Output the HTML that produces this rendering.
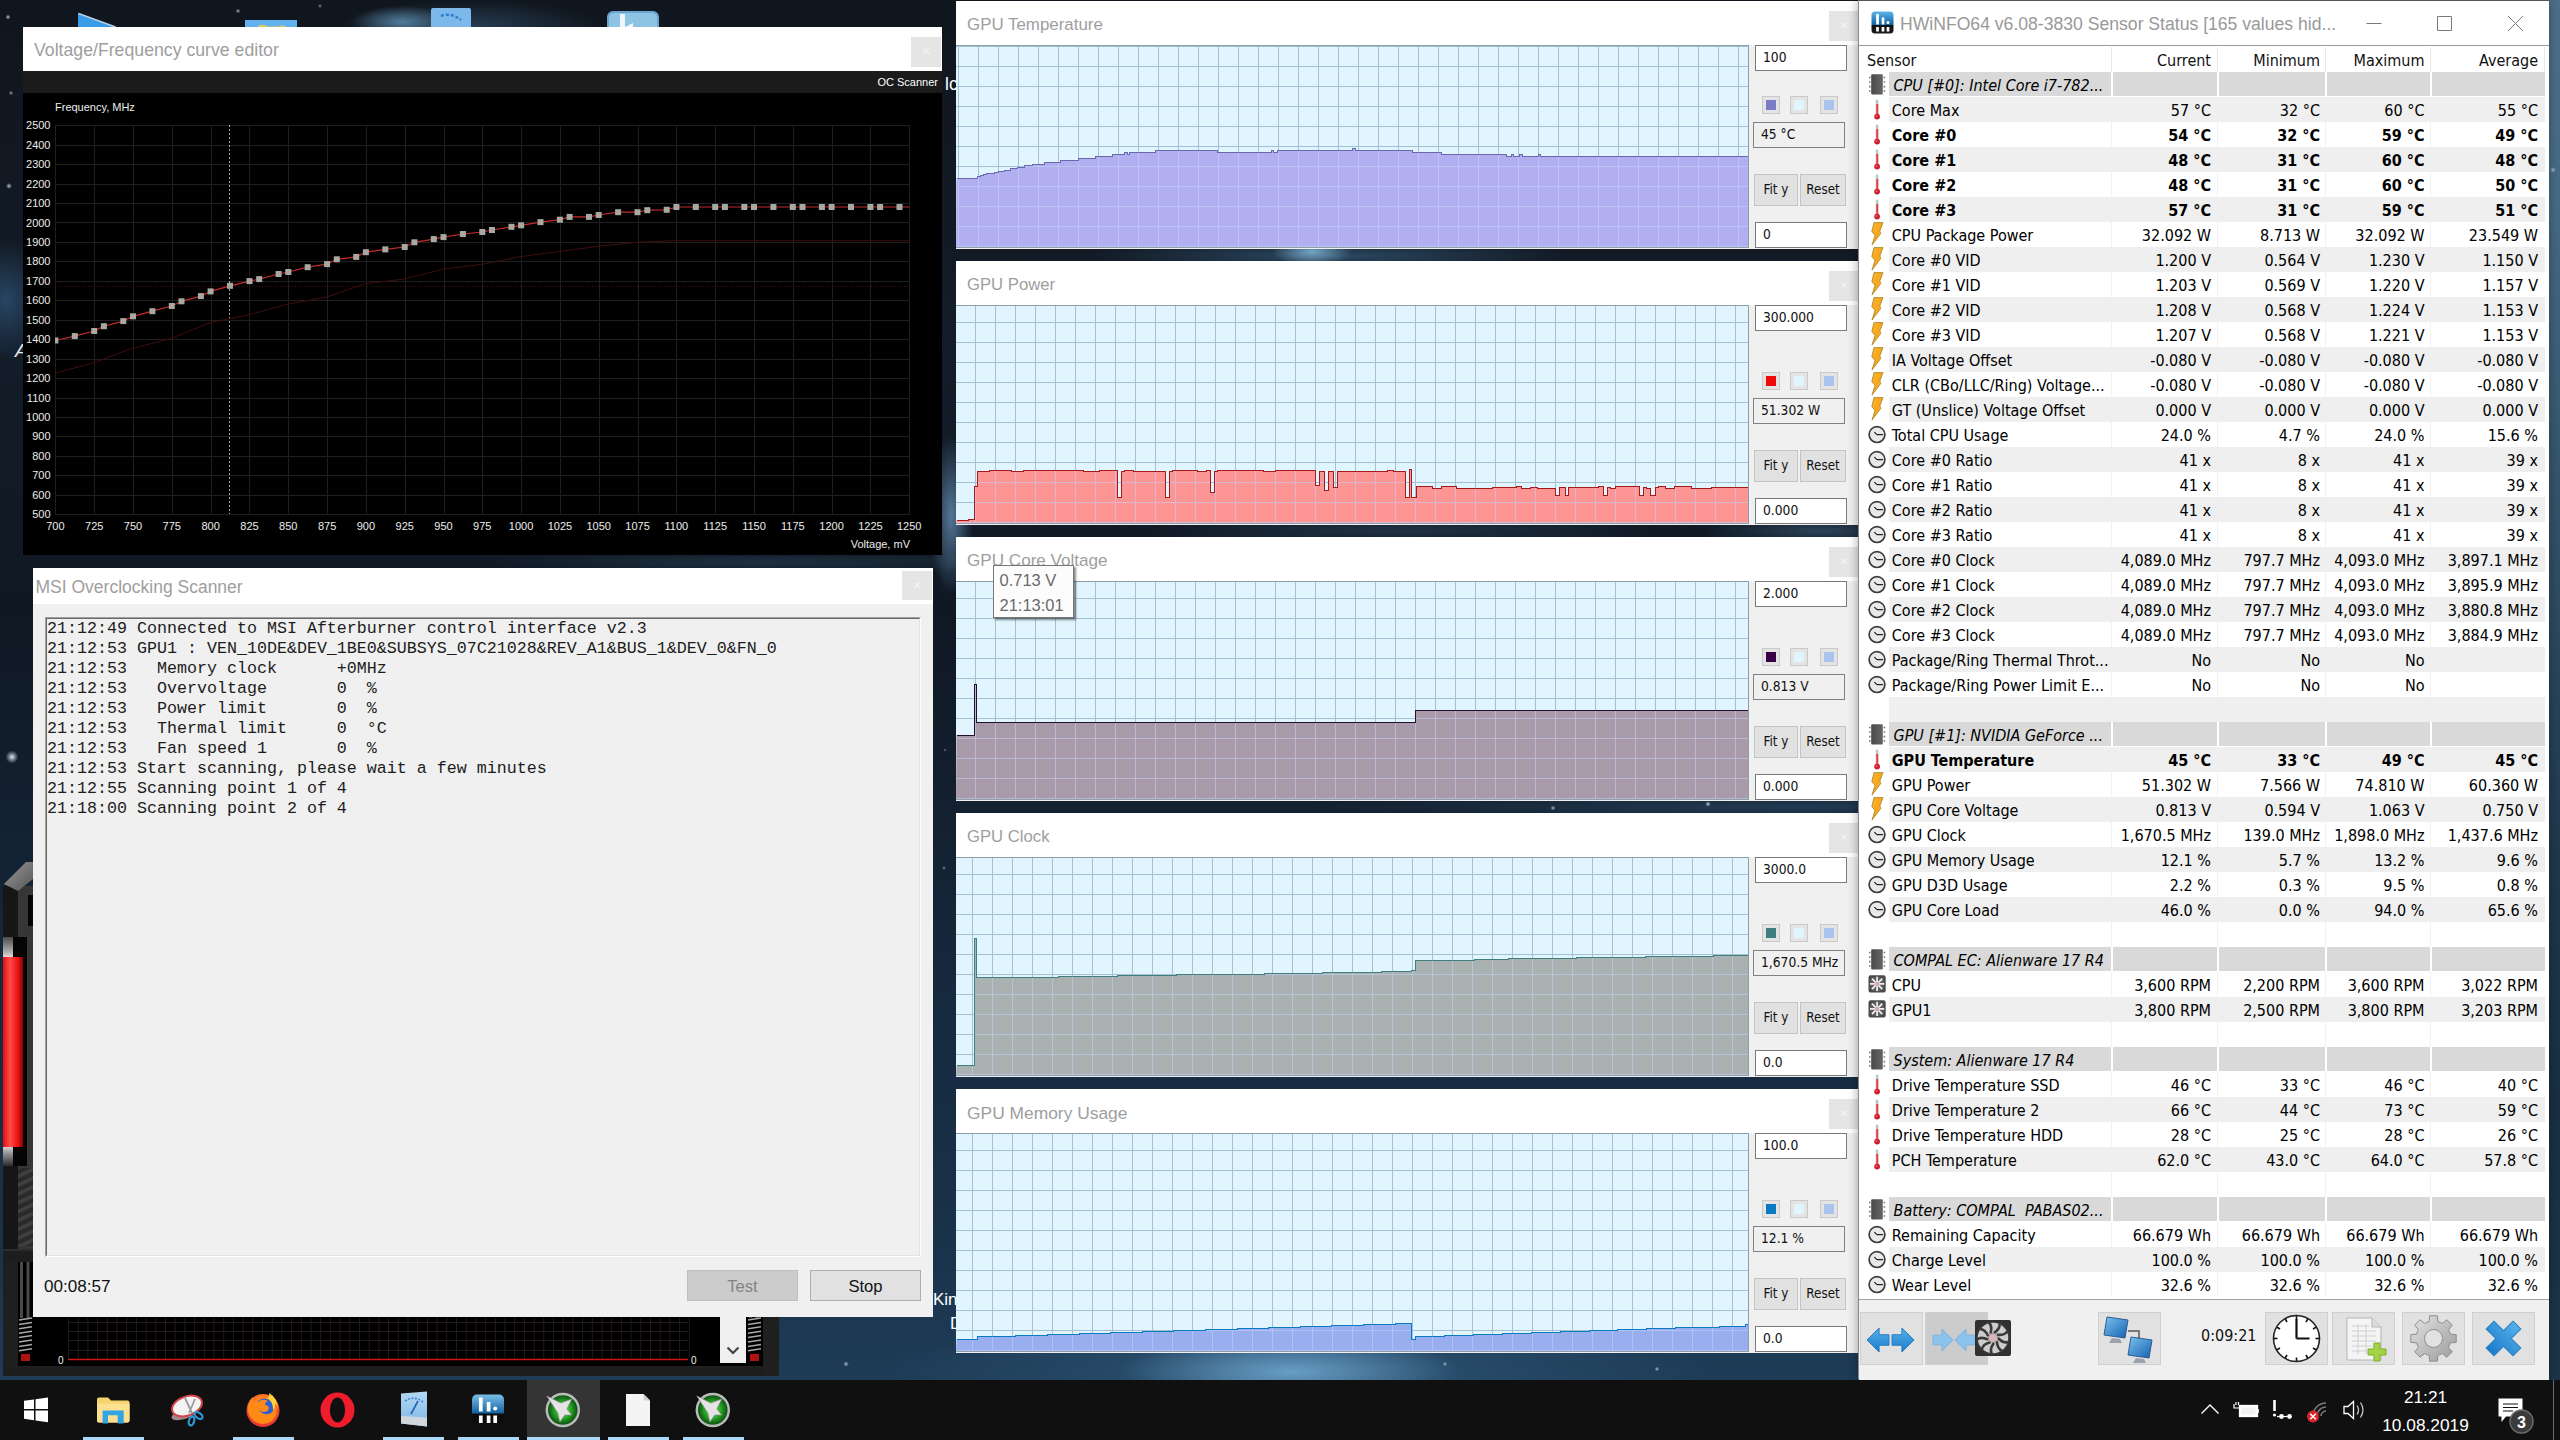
<!DOCTYPE html><html lang="en"><head><meta charset="utf-8"><title>Desktop</title><style>

*{box-sizing:border-box;margin:0;padding:0}
html,body{width:2560px;height:1440px;overflow:hidden}
body{position:relative;background:#0c141e;font-family:"Liberation Sans",sans-serif;}
.abs{position:absolute}
.win{position:absolute;background:#fff}
.tt{position:absolute;color:#9e9e9e;white-space:pre;font-family:"Liberation Sans",sans-serif;}
.tah{font-family:"DejaVu Sans Condensed","Liberation Sans",sans-serif}
.cb{position:absolute;background:#e5e5e5;color:#f4f4f4;text-align:center;font-size:14px;line-height:29px}
.mono{font-family:"Liberation Mono",monospace}
svg{position:absolute;overflow:visible}
svg text{white-space:pre}

</style></head><body>

<div class="abs" id="desk" style="left:0;top:0;width:2560px;height:1440px;
background:radial-gradient(circle 6.4px at 12px 757px, rgba(235,245,255,0.95) 0, rgba(235,245,255,0.47) 45%, rgba(235,245,255,0) 100%),radial-gradient(circle 2.6px at 8px 17px, rgba(235,245,255,0.8) 0, rgba(235,245,255,0.40) 45%, rgba(235,245,255,0) 100%),radial-gradient(circle 3.0px at 9px 186px, rgba(235,245,255,0.8) 0, rgba(235,245,255,0.40) 45%, rgba(235,245,255,0) 100%),radial-gradient(circle 2.4px at 11px 93px, rgba(235,245,255,0.6) 0, rgba(235,245,255,0.30) 45%, rgba(235,245,255,0) 100%),radial-gradient(circle 2.4px at 15px 1064px, rgba(235,245,255,0.6) 0, rgba(235,245,255,0.30) 45%, rgba(235,245,255,0) 100%),radial-gradient(circle 2.0px at 944px 868px, rgba(235,245,255,0.5) 0, rgba(235,245,255,0.25) 45%, rgba(235,245,255,0) 100%),radial-gradient(circle 1.8px at 945px 750px, rgba(235,245,255,0.4) 0, rgba(235,245,255,0.20) 45%, rgba(235,245,255,0) 100%),radial-gradient(circle 2.0px at 1362px 247px, rgba(235,245,255,0.6) 0, rgba(235,245,255,0.30) 45%, rgba(235,245,255,0) 100%),radial-gradient(circle 3.0px at 2553px 170px, rgba(235,245,255,0.6) 0, rgba(235,245,255,0.30) 45%, rgba(235,245,255,0) 100%),radial-gradient(circle 2.6px at 1553px 808px, rgba(235,245,255,0.7) 0, rgba(235,245,255,0.35) 45%, rgba(235,245,255,0) 100%),radial-gradient(circle 2.8px at 1708px 804px, rgba(235,245,255,0.8) 0, rgba(235,245,255,0.40) 45%, rgba(235,245,255,0) 100%),radial-gradient(circle 2.4px at 1657px 1369px, rgba(235,245,255,0.7) 0, rgba(235,245,255,0.35) 45%, rgba(235,245,255,0) 100%),radial-gradient(circle 2.4px at 1445px 1364px, rgba(235,245,255,0.6) 0, rgba(235,245,255,0.30) 45%, rgba(235,245,255,0) 100%),radial-gradient(circle 2.8px at 846px 1364px, rgba(235,245,255,0.7) 0, rgba(235,245,255,0.35) 45%, rgba(235,245,255,0) 100%),radial-gradient(circle 2.4px at 165px 1372px, rgba(235,245,255,0.7) 0, rgba(235,245,255,0.35) 45%, rgba(235,245,255,0) 100%),radial-gradient(circle 2.4px at 238px 11px, rgba(235,245,255,0.7) 0, rgba(235,245,255,0.35) 45%, rgba(235,245,255,0) 100%),radial-gradient(circle 2.0px at 320px 6px, rgba(235,245,255,0.6) 0, rgba(235,245,255,0.30) 45%, rgba(235,245,255,0) 100%),
radial-gradient(ellipse 50px 16px at 402px 22px, rgba(95,145,180,.8), rgba(70,115,150,0) 100%),
radial-gradient(ellipse 130px 26px at 470px 26px, rgba(50,80,108,.65), rgba(45,75,105,0) 100%),
radial-gradient(ellipse 40px 60px at 6px 300px, rgba(45,80,115,.8), rgba(45,75,105,0) 100%),
radial-gradient(ellipse 40px 14px at 1312px 252px, rgba(120,170,200,.95), rgba(90,140,175,0) 100%),
radial-gradient(ellipse 240px 16px at 1330px 256px, rgba(50,85,115,.8), rgba(50,80,110,0) 100%),
radial-gradient(ellipse 260px 14px at 1400px 531px, rgba(40,62,84,.7), rgba(40,60,80,0) 100%),
radial-gradient(ellipse 120px 14px at 1820px 531px, rgba(55,85,110,.7), rgba(40,60,80,0) 100%),
radial-gradient(ellipse 500px 14px at 1800px 807px, rgba(40,70,98,.7), rgba(40,60,80,0) 100%),
radial-gradient(ellipse 22px 80px at 951px 515px, rgba(95,135,170,.85), rgba(60,95,125,0) 100%),
radial-gradient(ellipse 300px 12px at 760px 562px, rgba(40,62,84,.6), rgba(40,60,80,0) 100%),
radial-gradient(ellipse 170px 38px at 1290px 1372px, rgba(110,165,205,.9), rgba(70,115,150,0) 100%),
radial-gradient(ellipse 420px 50px at 1300px 1370px, rgba(50,95,130,.7), rgba(50,95,130,0) 100%),
linear-gradient(#4c7088 0,#466b85 15%,#38586f 32%,#2a465c 48%,#1f384d 62%,#1a2f43 80%,#1c3449 96%) 2549px 0/11px 1380px no-repeat,
linear-gradient(#10161e 0,#121a25 18%,#131d29 24%,#0f1823 42%,#13202f 56%,#162a3f 70%,#193149 85%,#1e3c57 96%,#1e3c57);"></div>

<svg style="left:0;top:0" width="960" height="40" viewBox="0 0 960 40"><path d="M78 13L116 27V40H78Z" fill="#3a9be8"/><path d="M78.500 13.500L115.500 27" stroke="#b5cfe4" stroke-width="1.600"/><rect x="245" y="20" width="52" height="20" fill="#62b2ef"/><path d="M258 25.500q6 -2 10 1h10q4 -2 8 0v3h-28z" fill="#f2c94c" opacity=".85"/><rect x="431" y="8" width="40" height="32" rx="2" fill="#7cb9ea"/><path d="M441 16q10 -4 20 4" stroke="#2f7fcc" stroke-width="2.5" fill="none" stroke-dasharray="3 2"/><rect x="607" y="11" width="52" height="30" rx="6" fill="#6aa6cf"/><rect x="609" y="13" width="48" height="27" rx="5" fill="#8fc3e4"/><path d="M620 14h5v13l8 -4v6h-13z" fill="#eef6fb"/></svg>
<div class="abs" style="left:945px;top:73.500px;font-size:17.500px;line-height:20px;color:#fff;white-space:pre">lc</div>
<div class="abs" style="left:15px;top:340px;font-size:19px;line-height:22px;color:#e8e8e8;font-style:italic">A</div>
<div class="abs" style="left:933px;top:1290px;font-size:17px;line-height:20px;color:#fff;white-space:pre">Kin</div>
<div class="abs" style="left:950px;top:1314px;font-size:17px;line-height:20px;color:#fff;white-space:pre">D</div>
<svg style="left:0;top:0" width="800" height="1440" viewBox="0 0 800 1440">
<defs><linearGradient id="gtube" x1="0" y1="0" x2="1" y2="0"><stop offset="0" stop-color="#e01010"/><stop offset=".35" stop-color="#ff4a4a"/><stop offset=".7" stop-color="#f01818"/><stop offset="1" stop-color="#8a0000"/></linearGradient><linearGradient id="gcap" x1="0" y1="0" x2="0" y2="1"><stop offset="0" stop-color="#4a4a4a"/><stop offset=".8" stop-color="#b8b8b8"/><stop offset="1" stop-color="#e6d6d6"/></linearGradient><linearGradient id="gcap2" x1="0" y1="0" x2="0" y2="1"><stop offset="0" stop-color="#d8d0d0"/><stop offset=".3" stop-color="#9a9a9a"/><stop offset="1" stop-color="#2a2a2a"/></linearGradient><linearGradient id="gwedge" x1="0" y1="0" x2="1" y2="1"><stop offset="0" stop-color="#9a9a9a"/><stop offset="1" stop-color="#555"/></linearGradient><pattern id="pcarb" width="4" height="8" patternUnits="userSpaceOnUse" patternTransform="rotate(-25)"><rect width="4" height="8" fill="#2a2a2a"/><rect width="4" height="3.500" fill="#404040"/></pattern></defs>
<path d="M3 886H33V1376H3Z" fill="#161616"/>
<path d="M18 886H33V1250H18Z" fill="#363636"/>
<path d="M18 1168H33V1246H18Z" fill="url(#pcarb)"/>
<path d="M28 895H33V926H28Z" fill="#050505"/>
<path d="M4 884L26 862H33V879L18 891Z" fill="url(#gwedge)"/>
<path d="M3 937H27V1166H3Z" fill="#050505"/>
<path d="M3 957H23V1147H3Z" fill="url(#gtube)"/>
<path d="M3 937H13V957H3Z" fill="url(#gcap)"/><path d="M3 1147H13V1166H3Z" fill="url(#gcap2)"/>
<path d="M3 1249H33V1262H3Z" fill="#1d1d1d"/><path d="M3 1249H33V1251H3Z" fill="#2c2c2c"/>
<path d="M3 1262H779V1376H3Z" fill="#1f1f1f"/>
<path d="M18 1262H763V1366H18Z" fill="#000"/>
<path d="M3 1368H779V1376H3Z" fill="#1d1d1d"/>
<path d="M763 1262H779V1376H763Z" fill="#1f1f1f"/>
<path d="M21.5 1262V1318M28 1262V1318" stroke="#4a4a4a" stroke-width="3"/>
<path d="M19 1320.0L32 1318.0" stroke="#a8a8a8" stroke-width="1.500"/>
<path d="M19 1324.4L32 1322.4" stroke="#a8a8a8" stroke-width="1.500"/>
<path d="M19 1328.8L32 1326.8" stroke="#a8a8a8" stroke-width="1.500"/>
<path d="M19 1333.2L32 1331.2" stroke="#a8a8a8" stroke-width="1.500"/>
<path d="M19 1337.6L32 1335.6" stroke="#a8a8a8" stroke-width="1.500"/>
<path d="M19 1342.0L32 1340.0" stroke="#a8a8a8" stroke-width="1.500"/>
<path d="M19 1346.4L32 1344.4" stroke="#a8a8a8" stroke-width="1.500"/>
<path d="M19 1350.8L32 1348.8" stroke="#a8a8a8" stroke-width="1.500"/>
<path d="M21 1354h9v7h-9z" fill="#b01212"/>
<path d="M750.5 1262V1318M757 1262V1318" stroke="#4a4a4a" stroke-width="3"/>
<path d="M748 1320.0L761 1318.0" stroke="#a8a8a8" stroke-width="1.500"/>
<path d="M748 1324.4L761 1322.4" stroke="#a8a8a8" stroke-width="1.500"/>
<path d="M748 1328.8L761 1326.8" stroke="#a8a8a8" stroke-width="1.500"/>
<path d="M748 1333.2L761 1331.2" stroke="#a8a8a8" stroke-width="1.500"/>
<path d="M748 1337.6L761 1335.6" stroke="#a8a8a8" stroke-width="1.500"/>
<path d="M748 1342.0L761 1340.0" stroke="#a8a8a8" stroke-width="1.500"/>
<path d="M748 1346.4L761 1344.4" stroke="#a8a8a8" stroke-width="1.500"/>
<path d="M748 1350.8L761 1348.8" stroke="#a8a8a8" stroke-width="1.500"/>
<path d="M750 1354h9v7h-9z" fill="#b01212"/>
<path d="M68.5 1318V1359M78.2 1318V1359M87.9 1318V1359M97.6 1318V1359M107.3 1318V1359M117.0 1318V1359M126.7 1318V1359M136.4 1318V1359M146.1 1318V1359M155.8 1318V1359M165.5 1318V1359M175.2 1318V1359M184.9 1318V1359M194.6 1318V1359M204.3 1318V1359M214.0 1318V1359M223.7 1318V1359M233.4 1318V1359M243.1 1318V1359M252.8 1318V1359M262.5 1318V1359M272.2 1318V1359M281.9 1318V1359M291.6 1318V1359M301.3 1318V1359M311.0 1318V1359M320.7 1318V1359M330.4 1318V1359M340.1 1318V1359M349.8 1318V1359M359.5 1318V1359M369.2 1318V1359M378.9 1318V1359M388.6 1318V1359M398.3 1318V1359M408.0 1318V1359M417.7 1318V1359M427.4 1318V1359M437.1 1318V1359M446.8 1318V1359M456.5 1318V1359M466.2 1318V1359M475.9 1318V1359M485.6 1318V1359M495.3 1318V1359M505.0 1318V1359M514.7 1318V1359M524.4 1318V1359M534.1 1318V1359M543.8 1318V1359M553.5 1318V1359M563.2 1318V1359M572.9 1318V1359M582.6 1318V1359M592.3 1318V1359M602.0 1318V1359M611.7 1318V1359M621.4 1318V1359M631.1 1318V1359M640.8 1318V1359M650.5 1318V1359M660.2 1318V1359M669.9 1318V1359M679.6 1318V1359M689.3 1318V1359M68 1322.5H688M68 1331.5H688M68 1340.5H688M68 1350.5H688" stroke="#231a1a" stroke-width="1" fill="none"/>
<path d="M68 1359.500H688" stroke="#c81818" stroke-width="1.600"/>
<text x="58" y="1363.500" font-size="10" fill="#eee" font-family="Liberation Sans, sans-serif">0</text>
<text x="691" y="1363.500" font-size="10" fill="#eee" font-family="Liberation Sans, sans-serif">0</text>
</svg>
<div class="abs" style="left:720px;top:1316px;width:26px;height:47px;background:#f0f0f0"></div>
<svg style="left:726px;top:1346px" width="14" height="10" viewBox="0 0 14 10"><path d="M1.5 1.5L7 7L12.5 1.5" stroke="#444" stroke-width="2.2" fill="none"/></svg>
<div class="win" style="left:23px;top:27px;width:919px;height:528px;background:#000">
<div class="abs" style="left:0;top:0;width:919px;height:44px;background:#fff"></div>
<div class="tt" style="left:11px;top:12px;font-size:17.7px;line-height:22px">Voltage/Frequency curve editor</div>
<div class="cb" style="left:888px;top:10px;width:30px;height:30px">×</div>
<div class="abs" style="left:0;top:44px;width:919px;height:22px;background:#1b1b1b"></div>
<div class="abs" style="right:4px;top:49px;font-size:11px;line-height:13px;color:#fff;white-space:pre">OC Scanner</div>
</div>
<svg style="left:0;top:0" width="960" height="560" viewBox="0 0 960 560" font-family="Liberation Sans, sans-serif" font-size="11" fill="#ececec">
<path d="M55.5 125V514.5M94.5 125V514.5M133.5 125V514.5M172.5 125V514.5M211.5 125V514.5M249.5 125V514.5M288.5 125V514.5M327.5 125V514.5M366.5 125V514.5M405.5 125V514.5M444.5 125V514.5M482.5 125V514.5M521.5 125V514.5M560.5 125V514.5M599.5 125V514.5M638.5 125V514.5M676.5 125V514.5M715.5 125V514.5M754.5 125V514.5M793.5 125V514.5M832.5 125V514.5M870.5 125V514.5M909.5 125V514.5M55 514.5H910M55 495.5H910M55 475.5H910M55 456.5H910M55 436.5H910M55 417.5H910M55 398.5H910M55 378.5H910M55 359.5H910M55 339.5H910M55 320.5H910M55 300.5H910M55 281.5H910M55 261.5H910M55 242.5H910M55 222.5H910M55 203.5H910M55 184.5H910M55 164.5H910M55 145.5H910M55 125.5H910" stroke="#1f1f1f" stroke-width="1" fill="none" shape-rendering="crispEdges"/>
<text x="50.5" y="518.2" text-anchor="end">500</text>
<text x="50.5" y="498.8" text-anchor="end">600</text>
<text x="50.5" y="479.3" text-anchor="end">700</text>
<text x="50.5" y="459.9" text-anchor="end">800</text>
<text x="50.5" y="440.4" text-anchor="end">900</text>
<text x="50.5" y="421.0" text-anchor="end">1000</text>
<text x="50.5" y="401.5" text-anchor="end">1100</text>
<text x="50.5" y="382.1" text-anchor="end">1200</text>
<text x="50.5" y="362.6" text-anchor="end">1300</text>
<text x="50.5" y="343.2" text-anchor="end">1400</text>
<text x="50.5" y="323.7" text-anchor="end">1500</text>
<text x="50.5" y="304.3" text-anchor="end">1600</text>
<text x="50.5" y="284.8" text-anchor="end">1700</text>
<text x="50.5" y="265.4" text-anchor="end">1800</text>
<text x="50.5" y="245.9" text-anchor="end">1900</text>
<text x="50.5" y="226.5" text-anchor="end">2000</text>
<text x="50.5" y="207.0" text-anchor="end">2100</text>
<text x="50.5" y="187.6" text-anchor="end">2200</text>
<text x="50.5" y="168.1" text-anchor="end">2300</text>
<text x="50.5" y="148.7" text-anchor="end">2400</text>
<text x="50.5" y="129.2" text-anchor="end">2500</text>
<text x="55.4" y="530" text-anchor="middle">700</text>
<text x="94.2" y="530" text-anchor="middle">725</text>
<text x="133.0" y="530" text-anchor="middle">750</text>
<text x="171.8" y="530" text-anchor="middle">775</text>
<text x="210.6" y="530" text-anchor="middle">800</text>
<text x="249.5" y="530" text-anchor="middle">825</text>
<text x="288.3" y="530" text-anchor="middle">850</text>
<text x="327.1" y="530" text-anchor="middle">875</text>
<text x="365.9" y="530" text-anchor="middle">900</text>
<text x="404.7" y="530" text-anchor="middle">925</text>
<text x="443.5" y="530" text-anchor="middle">950</text>
<text x="482.3" y="530" text-anchor="middle">975</text>
<text x="521.1" y="530" text-anchor="middle">1000</text>
<text x="559.9" y="530" text-anchor="middle">1025</text>
<text x="598.7" y="530" text-anchor="middle">1050</text>
<text x="637.6" y="530" text-anchor="middle">1075</text>
<text x="676.4" y="530" text-anchor="middle">1100</text>
<text x="715.2" y="530" text-anchor="middle">1125</text>
<text x="754.0" y="530" text-anchor="middle">1150</text>
<text x="792.8" y="530" text-anchor="middle">1175</text>
<text x="831.6" y="530" text-anchor="middle">1200</text>
<text x="870.4" y="530" text-anchor="middle">1225</text>
<text x="909.2" y="530" text-anchor="middle">1250</text>
<text x="55" y="111">Frequency, MHz</text>
<text x="910" y="548" text-anchor="end">Voltage, mV</text>
<path d="M229.5 125V514" stroke="#a8a8a8" stroke-width="1" stroke-dasharray="2 2" fill="none"/>
<path d="M55 286.5H910" stroke="#451010" stroke-width="1" stroke-dasharray="1 2" fill="none"/>
<polyline points="55.4,373 93,363 132,348.4 171,338.5 210,322.6 249.4,314.7 288.2,304 327,297 365,283.8 403.8,279.1 443,269.2 481.8,264.4 521,256.5 559.8,251.4 599,246.2 637,242.3 673,240.7 909.3,240.7" stroke="#3e0f0f" stroke-width="1" fill="none"/>
<polyline points="55.4,340.5 74.8,336.1 94.2,331.0 103.9,326.2 123.3,321.1 133.0,316.3 152.4,311.2 171.8,306.0 181.5,301.3 200.9,296.1 210.6,291.4 230.0,285.8 249.5,281.1 259.2,279.1 278.6,274.0 288.3,272.0 307.7,267.2 327.1,264.1 336.8,259.3 356.2,256.9 365.9,252.2 385.3,249.4 404.7,247.0 414.4,242.3 433.8,239.1 443.5,237.1 462.9,234.0 482.3,232.0 492.0,230.0 511.4,226.8 521.1,225.3 540.5,222.1 559.9,219.7 569.6,216.9 589.0,216.9 598.7,215.0 618.1,212.2 637.5,212.2 647.3,210.2 666.7,209.8 676.4,207.0 695.8,207.0 715.2,207.0 724.9,207.0 744.3,207.0 754.0,207.0 773.4,207.0 792.8,207.0 802.5,207.0 821.9,207.0 831.6,207.0 851.0,207.0 870.4,207.0 880.1,207.0 899.5,207.0 909.3,207.0" stroke="#c42a2a" stroke-width="1.2" fill="none"/>
<rect x="55.0" y="337.5" width="3.4" height="6" fill="#a8a8a2"/>
<rect x="71.8" y="333.1" width="6.0" height="6" fill="#a8a8a2"/>
<rect x="91.2" y="328.0" width="6.0" height="6" fill="#a8a8a2"/>
<rect x="100.9" y="323.2" width="6.0" height="6" fill="#a8a8a2"/>
<rect x="120.3" y="318.1" width="6.0" height="6" fill="#a8a8a2"/>
<rect x="130.0" y="313.3" width="6.0" height="6" fill="#a8a8a2"/>
<rect x="149.4" y="308.2" width="6.0" height="6" fill="#a8a8a2"/>
<rect x="168.8" y="303.0" width="6.0" height="6" fill="#a8a8a2"/>
<rect x="178.5" y="298.3" width="6.0" height="6" fill="#a8a8a2"/>
<rect x="197.9" y="293.1" width="6.0" height="6" fill="#a8a8a2"/>
<rect x="207.6" y="288.4" width="6.0" height="6" fill="#a8a8a2"/>
<rect x="227.0" y="282.8" width="6.0" height="6" fill="#a8a8a2"/>
<rect x="246.5" y="278.1" width="6.0" height="6" fill="#a8a8a2"/>
<rect x="256.2" y="276.1" width="6.0" height="6" fill="#a8a8a2"/>
<rect x="275.6" y="271.0" width="6.0" height="6" fill="#a8a8a2"/>
<rect x="285.3" y="269.0" width="6.0" height="6" fill="#a8a8a2"/>
<rect x="304.7" y="264.2" width="6.0" height="6" fill="#a8a8a2"/>
<rect x="324.1" y="261.1" width="6.0" height="6" fill="#a8a8a2"/>
<rect x="333.8" y="256.3" width="6.0" height="6" fill="#a8a8a2"/>
<rect x="353.2" y="253.9" width="6.0" height="6" fill="#a8a8a2"/>
<rect x="362.9" y="249.2" width="6.0" height="6" fill="#a8a8a2"/>
<rect x="382.3" y="246.4" width="6.0" height="6" fill="#a8a8a2"/>
<rect x="401.7" y="244.0" width="6.0" height="6" fill="#a8a8a2"/>
<rect x="411.4" y="239.3" width="6.0" height="6" fill="#a8a8a2"/>
<rect x="430.8" y="236.1" width="6.0" height="6" fill="#a8a8a2"/>
<rect x="440.5" y="234.1" width="6.0" height="6" fill="#a8a8a2"/>
<rect x="459.9" y="231.0" width="6.0" height="6" fill="#a8a8a2"/>
<rect x="479.3" y="229.0" width="6.0" height="6" fill="#a8a8a2"/>
<rect x="489.0" y="227.0" width="6.0" height="6" fill="#a8a8a2"/>
<rect x="508.4" y="223.8" width="6.0" height="6" fill="#a8a8a2"/>
<rect x="518.1" y="222.3" width="6.0" height="6" fill="#a8a8a2"/>
<rect x="537.5" y="219.1" width="6.0" height="6" fill="#a8a8a2"/>
<rect x="556.9" y="216.7" width="6.0" height="6" fill="#a8a8a2"/>
<rect x="566.6" y="213.9" width="6.0" height="6" fill="#a8a8a2"/>
<rect x="586.0" y="213.9" width="6.0" height="6" fill="#a8a8a2"/>
<rect x="595.7" y="212.0" width="6.0" height="6" fill="#a8a8a2"/>
<rect x="615.1" y="209.2" width="6.0" height="6" fill="#a8a8a2"/>
<rect x="634.5" y="209.2" width="6.0" height="6" fill="#a8a8a2"/>
<rect x="644.3" y="207.2" width="6.0" height="6" fill="#a8a8a2"/>
<rect x="663.7" y="206.8" width="6.0" height="6" fill="#a8a8a2"/>
<rect x="673.4" y="204.0" width="6.0" height="6" fill="#a8a8a2"/>
<rect x="692.8" y="204.0" width="6.0" height="6" fill="#a8a8a2"/>
<rect x="712.2" y="204.0" width="6.0" height="6" fill="#a8a8a2"/>
<rect x="721.9" y="204.0" width="6.0" height="6" fill="#a8a8a2"/>
<rect x="741.3" y="204.0" width="6.0" height="6" fill="#a8a8a2"/>
<rect x="751.0" y="204.0" width="6.0" height="6" fill="#a8a8a2"/>
<rect x="770.4" y="204.0" width="6.0" height="6" fill="#a8a8a2"/>
<rect x="789.8" y="204.0" width="6.0" height="6" fill="#a8a8a2"/>
<rect x="799.5" y="204.0" width="6.0" height="6" fill="#a8a8a2"/>
<rect x="818.9" y="204.0" width="6.0" height="6" fill="#a8a8a2"/>
<rect x="828.6" y="204.0" width="6.0" height="6" fill="#a8a8a2"/>
<rect x="848.0" y="204.0" width="6.0" height="6" fill="#a8a8a2"/>
<rect x="867.4" y="204.0" width="6.0" height="6" fill="#a8a8a2"/>
<rect x="877.1" y="204.0" width="6.0" height="6" fill="#a8a8a2"/>
<rect x="896.5" y="204.0" width="6.0" height="6" fill="#a8a8a2"/>
</svg>
<div class="win" style="left:33px;top:568px;width:900px;height:749px;background:#f0f0f0">
<div class="abs" style="left:0;top:0;width:900px;height:36px;background:#fff"></div>
<div class="tt" style="left:2.5px;top:8px;font-size:17.5px;line-height:22px">MSI Overclocking Scanner</div>
<div class="cb" style="left:869px;top:3px;width:30px;height:29px">×</div>
<div class="abs" style="left:12px;top:49px;width:876px;height:640px;border:1px solid;border-color:#a0a0a0 #fff #fff #a0a0a0;background:#f0f0f0"><div class="abs" style="left:0;top:0;right:0;bottom:0;border:1px solid;border-color:#696969 #e3e3e3 #e3e3e3 #696969"></div><pre class="mono" style="position:absolute;left:1px;top:1px;font-size:16.67px;line-height:20px;color:#1c1c1c">21:12:49 Connected to MSI Afterburner control interface v2.3
21:12:53 GPU1 : VEN_10DE&amp;DEV_1BE0&amp;SUBSYS_07C21028&amp;REV_A1&amp;BUS_1&amp;DEV_0&amp;FN_0
21:12:53   Memory clock      +0MHz
21:12:53   Overvoltage       0  %
21:12:53   Power limit       0  %
21:12:53   Thermal limit     0  °C
21:12:53   Fan speed 1       0  %
21:12:53 Start scanning, please wait a few minutes
21:12:55 Scanning point 1 of 4
21:18:00 Scanning point 2 of 4</pre></div>
<div class="abs" style="left:11px;top:708px;font-size:17.1px;line-height:22px;color:#111;white-space:pre">00:08:57</div>
<div class="abs" style="left:654px;top:702px;width:111px;height:31px;background:#cccccc;border:1px solid #bfbfbf;color:#838383;font-size:16.6px;line-height:31px;text-align:center">Test</div>
<div class="abs" style="left:777px;top:702px;width:111px;height:31px;background:#e1e1e1;border:1px solid #adadad;color:#111;font-size:16.6px;line-height:31px;text-align:center">Stop</div>
</div>
<div class="win" style="left:956px;top:1px;width:904px;height:248px">
<div class="tt" style="left:11px;top:13px;font-size:16.9px;line-height:22px">GPU Temperature</div>
<div class="cb" style="left:873px;top:10px;width:30px;height:30px">×</div>
<div class="abs" style="left:0;top:44px;width:904px;height:204px;background:#f0f0f0"></div>
<div class="abs" style="left:0;top:44px;width:793px;height:203px;background:#e0f5fd"></div>
<div class="abs tah" style="left:799px;top:44px;width:92px;height:26px;background:#fff;border:1px solid #7a7a7a;font-size:13.7px;line-height:23px;padding-left:7px;color:#111;white-space:pre">100</div>
<div class="abs tah" style="left:797px;top:121px;width:92px;height:26px;background:#f0f0f0;border:1px solid #828282;font-size:13.7px;line-height:23px;padding-left:7px;color:#111;white-space:pre">45 °C</div>
<div class="abs tah" style="left:799px;top:221px;width:92px;height:26px;background:#fff;border:1px solid #7a7a7a;font-size:13.7px;line-height:23px;padding-left:7px;color:#111;white-space:pre">0</div>
<div class="abs" style="left:806px;top:95px;width:18px;height:18px;background:#e4e4e4;border:1px solid #c9c9c9"><div class="abs" style="left:3px;top:3px;width:10px;height:10px;background:#7b7bc9"></div></div>
<div class="abs" style="left:834px;top:95px;width:18px;height:18px;background:#e4e4e4;border:1px solid #c9c9c9"><div class="abs" style="left:3px;top:3px;width:10px;height:10px;background:#e0f5fd"></div></div>
<div class="abs" style="left:864px;top:95px;width:18px;height:18px;background:#e4e4e4;border:1px solid #c9c9c9"><div class="abs" style="left:3px;top:3px;width:10px;height:10px;background:#aac4ee"></div></div>
<div class="abs tah" style="left:798px;top:173px;width:44px;height:32px;background:#e1e1e1;border:1px solid #c4c4c4;font-size:13.33px;line-height:29px;text-align:center;color:#111">Fit y</div>
<div class="abs tah" style="left:844px;top:173px;width:46px;height:32px;background:#e1e1e1;border:1px solid #c4c4c4;font-size:13.33px;line-height:29px;text-align:center;color:#111">Reset</div>
</div>
<svg style="left:0;top:0" width="2560" height="1440" viewBox="0 0 2560 1440">
<path d="M958.5 45V248M978.5 45V248M998.5 45V248M1018.5 45V248M1038.5 45V248M1058.5 45V248M1078.5 45V248M1098.5 45V248M1118.5 45V248M1138.5 45V248M1158.5 45V248M1178.5 45V248M1198.5 45V248M1218.5 45V248M1238.5 45V248M1258.5 45V248M1278.5 45V248M1298.5 45V248M1318.5 45V248M1338.5 45V248M1358.5 45V248M1378.5 45V248M1398.5 45V248M1418.5 45V248M1438.5 45V248M1458.5 45V248M1478.5 45V248M1498.5 45V248M1518.5 45V248M1538.5 45V248M1558.5 45V248M1578.5 45V248M1598.5 45V248M1618.5 45V248M1638.5 45V248M1658.5 45V248M1678.5 45V248M1698.5 45V248M1718.5 45V248M1738.5 45V248M956 246.5H1749M956 226.5H1749M956 206.5H1749M956 186.5H1749M956 166.5H1749M956 146.5H1749M956 126.5H1749M956 106.5H1749M956 86.5H1749M956 66.5H1749M956 46.5H1749" stroke="#a6c0d3" stroke-width="1" fill="none" shape-rendering="crispEdges"/>
<path d="M956.5 178.5H977.5V176.5H980.5V175.5H983.5V174.5H986.5V173.5H989.5V173.5H994.5V172.5H998.5V171.5H1004.5V170.5H1010.5V168.5H1017.5V167.5H1024.5V165.5H1032.5V164.5H1044.5V162.5H1060.5V160.5H1078.5V158.5H1095.5V156.5H1112.5V154.5H1124.5V152.5H1127.5V154.5H1129.5V152.5H1135.5V152.5H1155.5V150.5H1217.5V152.5H1271.5V150.5H1273.5V152.5H1277.5V150.5H1352.5V148.5H1355.5V150.5H1412.5V152.5H1441.5V154.5H1506.5V156.5H1511.5V154.5H1513.5V156.5H1519.5V154.5H1522.5V156.5H1538.5V154.5H1540.5V156.5H1749V248H956Z" fill="#b1aff0" stroke="none"/>
<clipPath id="c1"><path d="M956.5 178.5H977.5V176.5H980.5V175.5H983.5V174.5H986.5V173.5H989.5V173.5H994.5V172.5H998.5V171.5H1004.5V170.5H1010.5V168.5H1017.5V167.5H1024.5V165.5H1032.5V164.5H1044.5V162.5H1060.5V160.5H1078.5V158.5H1095.5V156.5H1112.5V154.5H1124.5V152.5H1127.5V154.5H1129.5V152.5H1135.5V152.5H1155.5V150.5H1217.5V152.5H1271.5V150.5H1273.5V152.5H1277.5V150.5H1352.5V148.5H1355.5V150.5H1412.5V152.5H1441.5V154.5H1506.5V156.5H1511.5V154.5H1513.5V156.5H1519.5V154.5H1522.5V156.5H1538.5V154.5H1540.5V156.5H1749V248H956Z"/></clipPath>
<path d="M958.5 45V248M978.5 45V248M998.5 45V248M1018.5 45V248M1038.5 45V248M1058.5 45V248M1078.5 45V248M1098.5 45V248M1118.5 45V248M1138.5 45V248M1158.5 45V248M1178.5 45V248M1198.5 45V248M1218.5 45V248M1238.5 45V248M1258.5 45V248M1278.5 45V248M1298.5 45V248M1318.5 45V248M1338.5 45V248M1358.5 45V248M1378.5 45V248M1398.5 45V248M1418.5 45V248M1438.5 45V248M1458.5 45V248M1478.5 45V248M1498.5 45V248M1518.5 45V248M1538.5 45V248M1558.5 45V248M1578.5 45V248M1598.5 45V248M1618.5 45V248M1638.5 45V248M1658.5 45V248M1678.5 45V248M1698.5 45V248M1718.5 45V248M1738.5 45V248M956 246.5H1749M956 226.5H1749M956 206.5H1749M956 186.5H1749M956 166.5H1749M956 146.5H1749M956 126.5H1749M956 106.5H1749M956 86.5H1749M956 66.5H1749M956 46.5H1749" stroke="#c4d4fa" stroke-opacity=".55" stroke-width="1" fill="none" shape-rendering="crispEdges" clip-path="url(#c1)"/>
<path d="M956.5 178.5H977.5V176.5H980.5V175.5H983.5V174.5H986.5V173.5H989.5V173.5H994.5V172.5H998.5V171.5H1004.5V170.5H1010.5V168.5H1017.5V167.5H1024.5V165.5H1032.5V164.5H1044.5V162.5H1060.5V160.5H1078.5V158.5H1095.5V156.5H1112.5V154.5H1124.5V152.5H1127.5V154.5H1129.5V152.5H1135.5V152.5H1155.5V150.5H1217.5V152.5H1271.5V150.5H1273.5V152.5H1277.5V150.5H1352.5V148.5H1355.5V150.5H1412.5V152.5H1441.5V154.5H1506.5V156.5H1511.5V154.5H1513.5V156.5H1519.5V154.5H1522.5V156.5H1538.5V154.5H1540.5V156.5H1749" fill="none" stroke="#6a68ae" stroke-width="1" shape-rendering="crispEdges"/>
<path d="M956 45.5H1749M1748.5 45V248M956 247.5H1749" stroke="#8d9ea8" stroke-width="1" fill="none" shape-rendering="crispEdges"/>
</svg>
<div class="win" style="left:956px;top:261px;width:904px;height:264px">
<div class="tt" style="left:11px;top:13px;font-size:16.7px;line-height:22px">GPU Power</div>
<div class="cb" style="left:873px;top:10px;width:30px;height:30px">×</div>
<div class="abs" style="left:0;top:44px;width:904px;height:220px;background:#f0f0f0"></div>
<div class="abs" style="left:0;top:44px;width:793px;height:219px;background:#e0f5fd"></div>
<div class="abs tah" style="left:799px;top:44px;width:92px;height:26px;background:#fff;border:1px solid #7a7a7a;font-size:13.7px;line-height:23px;padding-left:7px;color:#111;white-space:pre">300.000</div>
<div class="abs tah" style="left:797px;top:137px;width:92px;height:26px;background:#f0f0f0;border:1px solid #828282;font-size:13.7px;line-height:23px;padding-left:7px;color:#111;white-space:pre">51.302 W</div>
<div class="abs tah" style="left:799px;top:237px;width:92px;height:26px;background:#fff;border:1px solid #7a7a7a;font-size:13.7px;line-height:23px;padding-left:7px;color:#111;white-space:pre">0.000</div>
<div class="abs" style="left:806px;top:111px;width:18px;height:18px;background:#e4e4e4;border:1px solid #c9c9c9"><div class="abs" style="left:3px;top:3px;width:10px;height:10px;background:#ee0a0a"></div></div>
<div class="abs" style="left:834px;top:111px;width:18px;height:18px;background:#e4e4e4;border:1px solid #c9c9c9"><div class="abs" style="left:3px;top:3px;width:10px;height:10px;background:#e0f5fd"></div></div>
<div class="abs" style="left:864px;top:111px;width:18px;height:18px;background:#e4e4e4;border:1px solid #c9c9c9"><div class="abs" style="left:3px;top:3px;width:10px;height:10px;background:#aac4ee"></div></div>
<div class="abs tah" style="left:798px;top:189px;width:44px;height:32px;background:#e1e1e1;border:1px solid #c4c4c4;font-size:13.33px;line-height:29px;text-align:center;color:#111">Fit y</div>
<div class="abs tah" style="left:844px;top:189px;width:46px;height:32px;background:#e1e1e1;border:1px solid #c4c4c4;font-size:13.33px;line-height:29px;text-align:center;color:#111">Reset</div>
</div>
<svg style="left:0;top:0" width="2560" height="1440" viewBox="0 0 2560 1440">
<path d="M975.5 305V524M995.5 305V524M1015.5 305V524M1035.5 305V524M1055.5 305V524M1075.5 305V524M1095.5 305V524M1115.5 305V524M1135.5 305V524M1155.5 305V524M1175.5 305V524M1195.5 305V524M1215.5 305V524M1235.5 305V524M1255.5 305V524M1275.5 305V524M1295.5 305V524M1315.5 305V524M1335.5 305V524M1355.5 305V524M1375.5 305V524M1395.5 305V524M1415.5 305V524M1435.5 305V524M1455.5 305V524M1475.5 305V524M1495.5 305V524M1515.5 305V524M1535.5 305V524M1555.5 305V524M1575.5 305V524M1595.5 305V524M1615.5 305V524M1635.5 305V524M1655.5 305V524M1675.5 305V524M1695.5 305V524M1715.5 305V524M1735.5 305V524M956 522.5H1749M956 502.5H1749M956 482.5H1749M956 462.5H1749M956 442.5H1749M956 422.5H1749M956 402.5H1749M956 382.5H1749M956 362.5H1749M956 342.5H1749M956 322.5H1749" stroke="#a6c0d3" stroke-width="1" fill="none" shape-rendering="crispEdges"/>
<path d="M956.5 520.5H968.5V519.5H974.5V486.5H977.5V471.5H980.5V471.5H989.5V470.5H1011.5V471.5H1023.5V470.5H1039.5V470.5H1061.5V470.5H1083.5V471.5H1099.5V470.5H1117.5V497.5H1121.5V471.5H1124.5V470.5H1133.5V471.5H1149.5V471.5H1165.5V497.5H1169.5V471.5H1172.5V470.5H1188.5V470.5H1197.5V471.5H1206.5V470.5H1210.5V492.5H1214.5V471.5H1217.5V470.5H1223.5V470.5H1229.5V470.5H1251.5V470.5H1263.5V471.5H1275.5V470.5H1297.5V470.5H1315.5V485.5H1319.5V471.5H1324.5V490.5H1328.5V471.5H1333.5V487.5H1337.5V471.5H1340.5V471.5H1356.5V471.5H1378.5V471.5H1387.5V470.5H1393.5V471.5H1402.5V471.5H1405.5V497.5H1409.5V469.5H1411.5V497.5H1416.5V486.5H1420.5V486.5H1432.5V488.5H1441.5V486.5H1456.5V488.5H1468.5V488.5H1477.5V488.5H1492.5V487.5H1507.5V487.5H1516.5V486.5H1521.5V488.5H1530.5V487.5H1537.5V488.5H1546.5V488.5H1555.5V495.5H1559.5V487.5H1565.5V495.5H1568.5V487.5H1571.5V487.5H1576.5V487.5H1583.5V487.5H1598.5V486.5H1603.5V495.5H1607.5V487.5H1610.5V488.5H1615.5V486.5H1627.5V486.5H1639.5V495.5H1643.5V487.5H1646.5V488.5H1650.5V495.5H1655.5V487.5H1658.5V486.5H1665.5V488.5H1674.5V486.5H1686.5V486.5H1691.5V488.5H1706.5V488.5H1711.5V487.5H1726.5V487.5H1741.5V487.5H1749V524H956Z" fill="#fd9595" stroke="none"/>
<clipPath id="c261"><path d="M956.5 520.5H968.5V519.5H974.5V486.5H977.5V471.5H980.5V471.5H989.5V470.5H1011.5V471.5H1023.5V470.5H1039.5V470.5H1061.5V470.5H1083.5V471.5H1099.5V470.5H1117.5V497.5H1121.5V471.5H1124.5V470.5H1133.5V471.5H1149.5V471.5H1165.5V497.5H1169.5V471.5H1172.5V470.5H1188.5V470.5H1197.5V471.5H1206.5V470.5H1210.5V492.5H1214.5V471.5H1217.5V470.5H1223.5V470.5H1229.5V470.5H1251.5V470.5H1263.5V471.5H1275.5V470.5H1297.5V470.5H1315.5V485.5H1319.5V471.5H1324.5V490.5H1328.5V471.5H1333.5V487.5H1337.5V471.5H1340.5V471.5H1356.5V471.5H1378.5V471.5H1387.5V470.5H1393.5V471.5H1402.5V471.5H1405.5V497.5H1409.5V469.5H1411.5V497.5H1416.5V486.5H1420.5V486.5H1432.5V488.5H1441.5V486.5H1456.5V488.5H1468.5V488.5H1477.5V488.5H1492.5V487.5H1507.5V487.5H1516.5V486.5H1521.5V488.5H1530.5V487.5H1537.5V488.5H1546.5V488.5H1555.5V495.5H1559.5V487.5H1565.5V495.5H1568.5V487.5H1571.5V487.5H1576.5V487.5H1583.5V487.5H1598.5V486.5H1603.5V495.5H1607.5V487.5H1610.5V488.5H1615.5V486.5H1627.5V486.5H1639.5V495.5H1643.5V487.5H1646.5V488.5H1650.5V495.5H1655.5V487.5H1658.5V486.5H1665.5V488.5H1674.5V486.5H1686.5V486.5H1691.5V488.5H1706.5V488.5H1711.5V487.5H1726.5V487.5H1741.5V487.5H1749V524H956Z"/></clipPath>
<path d="M975.5 305V524M995.5 305V524M1015.5 305V524M1035.5 305V524M1055.5 305V524M1075.5 305V524M1095.5 305V524M1115.5 305V524M1135.5 305V524M1155.5 305V524M1175.5 305V524M1195.5 305V524M1215.5 305V524M1235.5 305V524M1255.5 305V524M1275.5 305V524M1295.5 305V524M1315.5 305V524M1335.5 305V524M1355.5 305V524M1375.5 305V524M1395.5 305V524M1415.5 305V524M1435.5 305V524M1455.5 305V524M1475.5 305V524M1495.5 305V524M1515.5 305V524M1535.5 305V524M1555.5 305V524M1575.5 305V524M1595.5 305V524M1615.5 305V524M1635.5 305V524M1655.5 305V524M1675.5 305V524M1695.5 305V524M1715.5 305V524M1735.5 305V524M956 522.5H1749M956 502.5H1749M956 482.5H1749M956 462.5H1749M956 442.5H1749M956 422.5H1749M956 402.5H1749M956 382.5H1749M956 362.5H1749M956 342.5H1749M956 322.5H1749" stroke="#c4d4fa" stroke-opacity=".55" stroke-width="1" fill="none" shape-rendering="crispEdges" clip-path="url(#c261)"/>
<path d="M956.5 520.5H968.5V519.5H974.5V486.5H977.5V471.5H980.5V471.5H989.5V470.5H1011.5V471.5H1023.5V470.5H1039.5V470.5H1061.5V470.5H1083.5V471.5H1099.5V470.5H1117.5V497.5H1121.5V471.5H1124.5V470.5H1133.5V471.5H1149.5V471.5H1165.5V497.5H1169.5V471.5H1172.5V470.5H1188.5V470.5H1197.5V471.5H1206.5V470.5H1210.5V492.5H1214.5V471.5H1217.5V470.5H1223.5V470.5H1229.5V470.5H1251.5V470.5H1263.5V471.5H1275.5V470.5H1297.5V470.5H1315.5V485.5H1319.5V471.5H1324.5V490.5H1328.5V471.5H1333.5V487.5H1337.5V471.5H1340.5V471.5H1356.5V471.5H1378.5V471.5H1387.5V470.5H1393.5V471.5H1402.5V471.5H1405.5V497.5H1409.5V469.5H1411.5V497.5H1416.5V486.5H1420.5V486.5H1432.5V488.5H1441.5V486.5H1456.5V488.5H1468.5V488.5H1477.5V488.5H1492.5V487.5H1507.5V487.5H1516.5V486.5H1521.5V488.5H1530.5V487.5H1537.5V488.5H1546.5V488.5H1555.5V495.5H1559.5V487.5H1565.5V495.5H1568.5V487.5H1571.5V487.5H1576.5V487.5H1583.5V487.5H1598.5V486.5H1603.5V495.5H1607.5V487.5H1610.5V488.5H1615.5V486.5H1627.5V486.5H1639.5V495.5H1643.5V487.5H1646.5V488.5H1650.5V495.5H1655.5V487.5H1658.5V486.5H1665.5V488.5H1674.5V486.5H1686.5V486.5H1691.5V488.5H1706.5V488.5H1711.5V487.5H1726.5V487.5H1741.5V487.5H1749" fill="none" stroke="#a81a1a" stroke-width="1" shape-rendering="crispEdges"/>
<path d="M956 305.5H1749M1748.5 305V524M956 523.5H1749" stroke="#8d9ea8" stroke-width="1" fill="none" shape-rendering="crispEdges"/>
</svg>
<div class="win" style="left:956px;top:537px;width:904px;height:264px">
<div class="tt" style="left:11px;top:13px;font-size:17.1px;line-height:22px">GPU Core Voltage</div>
<div class="cb" style="left:873px;top:10px;width:30px;height:30px">×</div>
<div class="abs" style="left:0;top:44px;width:904px;height:220px;background:#f0f0f0"></div>
<div class="abs" style="left:0;top:44px;width:793px;height:219px;background:#e0f5fd"></div>
<div class="abs tah" style="left:799px;top:44px;width:92px;height:26px;background:#fff;border:1px solid #7a7a7a;font-size:13.7px;line-height:23px;padding-left:7px;color:#111;white-space:pre">2.000</div>
<div class="abs tah" style="left:797px;top:137px;width:92px;height:26px;background:#f0f0f0;border:1px solid #828282;font-size:13.7px;line-height:23px;padding-left:7px;color:#111;white-space:pre">0.813 V</div>
<div class="abs tah" style="left:799px;top:237px;width:92px;height:26px;background:#fff;border:1px solid #7a7a7a;font-size:13.7px;line-height:23px;padding-left:7px;color:#111;white-space:pre">0.000</div>
<div class="abs" style="left:806px;top:111px;width:18px;height:18px;background:#e4e4e4;border:1px solid #c9c9c9"><div class="abs" style="left:3px;top:3px;width:10px;height:10px;background:#3a0046"></div></div>
<div class="abs" style="left:834px;top:111px;width:18px;height:18px;background:#e4e4e4;border:1px solid #c9c9c9"><div class="abs" style="left:3px;top:3px;width:10px;height:10px;background:#e0f5fd"></div></div>
<div class="abs" style="left:864px;top:111px;width:18px;height:18px;background:#e4e4e4;border:1px solid #c9c9c9"><div class="abs" style="left:3px;top:3px;width:10px;height:10px;background:#aac4ee"></div></div>
<div class="abs tah" style="left:798px;top:189px;width:44px;height:32px;background:#e1e1e1;border:1px solid #c4c4c4;font-size:13.33px;line-height:29px;text-align:center;color:#111">Fit y</div>
<div class="abs tah" style="left:844px;top:189px;width:46px;height:32px;background:#e1e1e1;border:1px solid #c4c4c4;font-size:13.33px;line-height:29px;text-align:center;color:#111">Reset</div>
</div>
<svg style="left:0;top:0" width="2560" height="1440" viewBox="0 0 2560 1440">
<path d="M975.5 581V800M995.5 581V800M1015.5 581V800M1035.5 581V800M1055.5 581V800M1075.5 581V800M1095.5 581V800M1115.5 581V800M1135.5 581V800M1155.5 581V800M1175.5 581V800M1195.5 581V800M1215.5 581V800M1235.5 581V800M1255.5 581V800M1275.5 581V800M1295.5 581V800M1315.5 581V800M1335.5 581V800M1355.5 581V800M1375.5 581V800M1395.5 581V800M1415.5 581V800M1435.5 581V800M1455.5 581V800M1475.5 581V800M1495.5 581V800M1515.5 581V800M1535.5 581V800M1555.5 581V800M1575.5 581V800M1595.5 581V800M1615.5 581V800M1635.5 581V800M1655.5 581V800M1675.5 581V800M1695.5 581V800M1715.5 581V800M1735.5 581V800M956 798.5H1749M956 778.5H1749M956 758.5H1749M956 738.5H1749M956 718.5H1749M956 698.5H1749M956 678.5H1749M956 658.5H1749M956 638.5H1749M956 618.5H1749M956 598.5H1749" stroke="#a6c0d3" stroke-width="1" fill="none" shape-rendering="crispEdges"/>
<path d="M956.5 735.5H974.5V684.5H976.5V722.5H1415.5V710.5H1749V800H956Z" fill="#a99aa9" stroke="none"/>
<clipPath id="c537"><path d="M956.5 735.5H974.5V684.5H976.5V722.5H1415.5V710.5H1749V800H956Z"/></clipPath>
<path d="M975.5 581V800M995.5 581V800M1015.5 581V800M1035.5 581V800M1055.5 581V800M1075.5 581V800M1095.5 581V800M1115.5 581V800M1135.5 581V800M1155.5 581V800M1175.5 581V800M1195.5 581V800M1215.5 581V800M1235.5 581V800M1255.5 581V800M1275.5 581V800M1295.5 581V800M1315.5 581V800M1335.5 581V800M1355.5 581V800M1375.5 581V800M1395.5 581V800M1415.5 581V800M1435.5 581V800M1455.5 581V800M1475.5 581V800M1495.5 581V800M1515.5 581V800M1535.5 581V800M1555.5 581V800M1575.5 581V800M1595.5 581V800M1615.5 581V800M1635.5 581V800M1655.5 581V800M1675.5 581V800M1695.5 581V800M1715.5 581V800M1735.5 581V800M956 798.5H1749M956 778.5H1749M956 758.5H1749M956 738.5H1749M956 718.5H1749M956 698.5H1749M956 678.5H1749M956 658.5H1749M956 638.5H1749M956 618.5H1749M956 598.5H1749" stroke="#c4d4fa" stroke-opacity=".55" stroke-width="1" fill="none" shape-rendering="crispEdges" clip-path="url(#c537)"/>
<path d="M956.5 735.5H974.5V684.5H976.5V722.5H1415.5V710.5H1749" fill="none" stroke="#22102e" stroke-width="1" shape-rendering="crispEdges"/>
<path d="M956 581.5H1749M1748.5 581V800M956 799.5H1749" stroke="#8d9ea8" stroke-width="1" fill="none" shape-rendering="crispEdges"/>
</svg>
<div class="win" style="left:956px;top:813px;width:904px;height:264px">
<div class="tt" style="left:11px;top:13px;font-size:16.7px;line-height:22px">GPU Clock</div>
<div class="cb" style="left:873px;top:10px;width:30px;height:30px">×</div>
<div class="abs" style="left:0;top:44px;width:904px;height:220px;background:#f0f0f0"></div>
<div class="abs" style="left:0;top:44px;width:793px;height:219px;background:#e0f5fd"></div>
<div class="abs tah" style="left:799px;top:44px;width:92px;height:26px;background:#fff;border:1px solid #7a7a7a;font-size:13.7px;line-height:23px;padding-left:7px;color:#111;white-space:pre">3000.0</div>
<div class="abs tah" style="left:797px;top:137px;width:92px;height:26px;background:#f0f0f0;border:1px solid #828282;font-size:13.7px;line-height:23px;padding-left:7px;color:#111;white-space:pre">1,670.5 MHz</div>
<div class="abs tah" style="left:799px;top:237px;width:92px;height:26px;background:#fff;border:1px solid #7a7a7a;font-size:13.7px;line-height:23px;padding-left:7px;color:#111;white-space:pre">0.0</div>
<div class="abs" style="left:806px;top:111px;width:18px;height:18px;background:#e4e4e4;border:1px solid #c9c9c9"><div class="abs" style="left:3px;top:3px;width:10px;height:10px;background:#3e7e7e"></div></div>
<div class="abs" style="left:834px;top:111px;width:18px;height:18px;background:#e4e4e4;border:1px solid #c9c9c9"><div class="abs" style="left:3px;top:3px;width:10px;height:10px;background:#e0f5fd"></div></div>
<div class="abs" style="left:864px;top:111px;width:18px;height:18px;background:#e4e4e4;border:1px solid #c9c9c9"><div class="abs" style="left:3px;top:3px;width:10px;height:10px;background:#aac4ee"></div></div>
<div class="abs tah" style="left:798px;top:189px;width:44px;height:32px;background:#e1e1e1;border:1px solid #c4c4c4;font-size:13.33px;line-height:29px;text-align:center;color:#111">Fit y</div>
<div class="abs tah" style="left:844px;top:189px;width:46px;height:32px;background:#e1e1e1;border:1px solid #c4c4c4;font-size:13.33px;line-height:29px;text-align:center;color:#111">Reset</div>
</div>
<svg style="left:0;top:0" width="2560" height="1440" viewBox="0 0 2560 1440">
<path d="M972.5 857V1076M992.5 857V1076M1012.5 857V1076M1032.5 857V1076M1052.5 857V1076M1072.5 857V1076M1092.5 857V1076M1112.5 857V1076M1132.5 857V1076M1152.5 857V1076M1172.5 857V1076M1192.5 857V1076M1212.5 857V1076M1232.5 857V1076M1252.5 857V1076M1272.5 857V1076M1292.5 857V1076M1312.5 857V1076M1332.5 857V1076M1352.5 857V1076M1372.5 857V1076M1392.5 857V1076M1412.5 857V1076M1432.5 857V1076M1452.5 857V1076M1472.5 857V1076M1492.5 857V1076M1512.5 857V1076M1532.5 857V1076M1552.5 857V1076M1572.5 857V1076M1592.5 857V1076M1612.5 857V1076M1632.5 857V1076M1652.5 857V1076M1672.5 857V1076M1692.5 857V1076M1712.5 857V1076M1732.5 857V1076M956 1074.5H1749M956 1054.5H1749M956 1034.5H1749M956 1014.5H1749M956 994.5H1749M956 974.5H1749M956 954.5H1749M956 934.5H1749M956 914.5H1749M956 894.5H1749M956 874.5H1749" stroke="#a6c0d3" stroke-width="1" fill="none" shape-rendering="crispEdges"/>
<path d="M956.5 1065.5H974.5V938.5H976.5V977.5H1000.5V977.5H1029.5V977.5H1058.5V976.5H1088.5V976.5H1117.5V975.5H1146.5V975.5H1176.5V974.5H1205.5V974.5H1234.5V974.5H1264.5V973.5H1293.5V973.5H1322.5V972.5H1352.5V972.5H1381.5V971.5H1411.5V970.5H1415.5V960.5H1440.5V960.5H1474.5V959.5H1508.5V958.5H1542.5V958.5H1576.5V957.5H1611.5V957.5H1645.5V956.5H1679.5V956.5H1713.5V955.5H1749V1076H956Z" fill="#a9b2b0" stroke="none"/>
<clipPath id="c813"><path d="M956.5 1065.5H974.5V938.5H976.5V977.5H1000.5V977.5H1029.5V977.5H1058.5V976.5H1088.5V976.5H1117.5V975.5H1146.5V975.5H1176.5V974.5H1205.5V974.5H1234.5V974.5H1264.5V973.5H1293.5V973.5H1322.5V972.5H1352.5V972.5H1381.5V971.5H1411.5V970.5H1415.5V960.5H1440.5V960.5H1474.5V959.5H1508.5V958.5H1542.5V958.5H1576.5V957.5H1611.5V957.5H1645.5V956.5H1679.5V956.5H1713.5V955.5H1749V1076H956Z"/></clipPath>
<path d="M972.5 857V1076M992.5 857V1076M1012.5 857V1076M1032.5 857V1076M1052.5 857V1076M1072.5 857V1076M1092.5 857V1076M1112.5 857V1076M1132.5 857V1076M1152.5 857V1076M1172.5 857V1076M1192.5 857V1076M1212.5 857V1076M1232.5 857V1076M1252.5 857V1076M1272.5 857V1076M1292.5 857V1076M1312.5 857V1076M1332.5 857V1076M1352.5 857V1076M1372.5 857V1076M1392.5 857V1076M1412.5 857V1076M1432.5 857V1076M1452.5 857V1076M1472.5 857V1076M1492.5 857V1076M1512.5 857V1076M1532.5 857V1076M1552.5 857V1076M1572.5 857V1076M1592.5 857V1076M1612.5 857V1076M1632.5 857V1076M1652.5 857V1076M1672.5 857V1076M1692.5 857V1076M1712.5 857V1076M1732.5 857V1076M956 1074.5H1749M956 1054.5H1749M956 1034.5H1749M956 1014.5H1749M956 994.5H1749M956 974.5H1749M956 954.5H1749M956 934.5H1749M956 914.5H1749M956 894.5H1749M956 874.5H1749" stroke="#c4d4fa" stroke-opacity=".55" stroke-width="1" fill="none" shape-rendering="crispEdges" clip-path="url(#c813)"/>
<path d="M956.5 1065.5H974.5V938.5H976.5V977.5H1000.5V977.5H1029.5V977.5H1058.5V976.5H1088.5V976.5H1117.5V975.5H1146.5V975.5H1176.5V974.5H1205.5V974.5H1234.5V974.5H1264.5V973.5H1293.5V973.5H1322.5V972.5H1352.5V972.5H1381.5V971.5H1411.5V970.5H1415.5V960.5H1440.5V960.5H1474.5V959.5H1508.5V958.5H1542.5V958.5H1576.5V957.5H1611.5V957.5H1645.5V956.5H1679.5V956.5H1713.5V955.5H1749" fill="none" stroke="#3f7f7f" stroke-width="1" shape-rendering="crispEdges"/>
<path d="M956 857.5H1749M1748.5 857V1076M956 1075.5H1749" stroke="#8d9ea8" stroke-width="1" fill="none" shape-rendering="crispEdges"/>
</svg>
<div class="win" style="left:956px;top:1089px;width:904px;height:264px">
<div class="tt" style="left:11px;top:13px;font-size:17.4px;line-height:22px">GPU Memory Usage</div>
<div class="cb" style="left:873px;top:10px;width:30px;height:30px">×</div>
<div class="abs" style="left:0;top:44px;width:904px;height:220px;background:#f0f0f0"></div>
<div class="abs" style="left:0;top:44px;width:793px;height:219px;background:#e0f5fd"></div>
<div class="abs tah" style="left:799px;top:44px;width:92px;height:26px;background:#fff;border:1px solid #7a7a7a;font-size:13.7px;line-height:23px;padding-left:7px;color:#111;white-space:pre">100.0</div>
<div class="abs tah" style="left:797px;top:137px;width:92px;height:26px;background:#f0f0f0;border:1px solid #828282;font-size:13.7px;line-height:23px;padding-left:7px;color:#111;white-space:pre">12.1 %</div>
<div class="abs tah" style="left:799px;top:237px;width:92px;height:26px;background:#fff;border:1px solid #7a7a7a;font-size:13.7px;line-height:23px;padding-left:7px;color:#111;white-space:pre">0.0</div>
<div class="abs" style="left:806px;top:111px;width:18px;height:18px;background:#e4e4e4;border:1px solid #c9c9c9"><div class="abs" style="left:3px;top:3px;width:10px;height:10px;background:#0a7ac3"></div></div>
<div class="abs" style="left:834px;top:111px;width:18px;height:18px;background:#e4e4e4;border:1px solid #c9c9c9"><div class="abs" style="left:3px;top:3px;width:10px;height:10px;background:#e0f5fd"></div></div>
<div class="abs" style="left:864px;top:111px;width:18px;height:18px;background:#e4e4e4;border:1px solid #c9c9c9"><div class="abs" style="left:3px;top:3px;width:10px;height:10px;background:#aac4ee"></div></div>
<div class="abs tah" style="left:798px;top:189px;width:44px;height:32px;background:#e1e1e1;border:1px solid #c4c4c4;font-size:13.33px;line-height:29px;text-align:center;color:#111">Fit y</div>
<div class="abs tah" style="left:844px;top:189px;width:46px;height:32px;background:#e1e1e1;border:1px solid #c4c4c4;font-size:13.33px;line-height:29px;text-align:center;color:#111">Reset</div>
</div>
<svg style="left:0;top:0" width="2560" height="1440" viewBox="0 0 2560 1440">
<path d="M972.5 1133V1352M992.5 1133V1352M1012.5 1133V1352M1032.5 1133V1352M1052.5 1133V1352M1072.5 1133V1352M1092.5 1133V1352M1112.5 1133V1352M1132.5 1133V1352M1152.5 1133V1352M1172.5 1133V1352M1192.5 1133V1352M1212.5 1133V1352M1232.5 1133V1352M1252.5 1133V1352M1272.5 1133V1352M1292.5 1133V1352M1312.5 1133V1352M1332.5 1133V1352M1352.5 1133V1352M1372.5 1133V1352M1392.5 1133V1352M1412.5 1133V1352M1432.5 1133V1352M1452.5 1133V1352M1472.5 1133V1352M1492.5 1133V1352M1512.5 1133V1352M1532.5 1133V1352M1552.5 1133V1352M1572.5 1133V1352M1592.5 1133V1352M1612.5 1133V1352M1632.5 1133V1352M1652.5 1133V1352M1672.5 1133V1352M1692.5 1133V1352M1712.5 1133V1352M1732.5 1133V1352M956 1350.5H1749M956 1330.5H1749M956 1310.5H1749M956 1290.5H1749M956 1270.5H1749M956 1250.5H1749M956 1230.5H1749M956 1210.5H1749M956 1190.5H1749M956 1170.5H1749M956 1150.5H1749" stroke="#a6c0d3" stroke-width="1" fill="none" shape-rendering="crispEdges"/>
<path d="M956.5 1339.5H977.5V1336.5H1000.5V1336.5H1015.5V1335.5H1031.5V1335.5H1047.5V1334.5H1063.5V1334.5H1079.5V1333.5H1094.5V1333.5H1110.5V1332.5H1126.5V1332.5H1142.5V1331.5H1158.5V1331.5H1173.5V1330.5H1189.5V1330.5H1205.5V1329.5H1221.5V1329.5H1237.5V1328.5H1252.5V1328.5H1268.5V1327.5H1284.5V1327.5H1300.5V1326.5H1316.5V1326.5H1331.5V1325.5H1347.5V1325.5H1363.5V1324.5H1379.5V1324.5H1395.5V1323.5H1411.5V1339.5H1415.5V1336.5H1430.5V1336.5H1444.5V1335.5H1458.5V1335.5H1473.5V1334.5H1487.5V1334.5H1502.5V1333.5H1516.5V1333.5H1531.5V1332.5H1545.5V1332.5H1560.5V1331.5H1574.5V1331.5H1589.5V1330.5H1603.5V1330.5H1617.5V1329.5H1632.5V1329.5H1646.5V1328.5H1661.5V1328.5H1675.5V1327.5H1690.5V1327.5H1704.5V1327.5H1719.5V1326.5H1733.5V1326.5H1745.5V1324.5H1749V1352H956Z" fill="#98aeef" stroke="none"/>
<clipPath id="c1089"><path d="M956.5 1339.5H977.5V1336.5H1000.5V1336.5H1015.5V1335.5H1031.5V1335.5H1047.5V1334.5H1063.5V1334.5H1079.5V1333.5H1094.5V1333.5H1110.5V1332.5H1126.5V1332.5H1142.5V1331.5H1158.5V1331.5H1173.5V1330.5H1189.5V1330.5H1205.5V1329.5H1221.5V1329.5H1237.5V1328.5H1252.5V1328.5H1268.5V1327.5H1284.5V1327.5H1300.5V1326.5H1316.5V1326.5H1331.5V1325.5H1347.5V1325.5H1363.5V1324.5H1379.5V1324.5H1395.5V1323.5H1411.5V1339.5H1415.5V1336.5H1430.5V1336.5H1444.5V1335.5H1458.5V1335.5H1473.5V1334.5H1487.5V1334.5H1502.5V1333.5H1516.5V1333.5H1531.5V1332.5H1545.5V1332.5H1560.5V1331.5H1574.5V1331.5H1589.5V1330.5H1603.5V1330.5H1617.5V1329.5H1632.5V1329.5H1646.5V1328.5H1661.5V1328.5H1675.5V1327.5H1690.5V1327.5H1704.5V1327.5H1719.5V1326.5H1733.5V1326.5H1745.5V1324.5H1749V1352H956Z"/></clipPath>
<path d="M972.5 1133V1352M992.5 1133V1352M1012.5 1133V1352M1032.5 1133V1352M1052.5 1133V1352M1072.5 1133V1352M1092.5 1133V1352M1112.5 1133V1352M1132.5 1133V1352M1152.5 1133V1352M1172.5 1133V1352M1192.5 1133V1352M1212.5 1133V1352M1232.5 1133V1352M1252.5 1133V1352M1272.5 1133V1352M1292.5 1133V1352M1312.5 1133V1352M1332.5 1133V1352M1352.5 1133V1352M1372.5 1133V1352M1392.5 1133V1352M1412.5 1133V1352M1432.5 1133V1352M1452.5 1133V1352M1472.5 1133V1352M1492.5 1133V1352M1512.5 1133V1352M1532.5 1133V1352M1552.5 1133V1352M1572.5 1133V1352M1592.5 1133V1352M1612.5 1133V1352M1632.5 1133V1352M1652.5 1133V1352M1672.5 1133V1352M1692.5 1133V1352M1712.5 1133V1352M1732.5 1133V1352M956 1350.5H1749M956 1330.5H1749M956 1310.5H1749M956 1290.5H1749M956 1270.5H1749M956 1250.5H1749M956 1230.5H1749M956 1210.5H1749M956 1190.5H1749M956 1170.5H1749M956 1150.5H1749" stroke="#c4d4fa" stroke-opacity=".55" stroke-width="1" fill="none" shape-rendering="crispEdges" clip-path="url(#c1089)"/>
<path d="M956.5 1339.5H977.5V1336.5H1000.5V1336.5H1015.5V1335.5H1031.5V1335.5H1047.5V1334.5H1063.5V1334.5H1079.5V1333.5H1094.5V1333.5H1110.5V1332.5H1126.5V1332.5H1142.5V1331.5H1158.5V1331.5H1173.5V1330.5H1189.5V1330.5H1205.5V1329.5H1221.5V1329.5H1237.5V1328.5H1252.5V1328.5H1268.5V1327.5H1284.5V1327.5H1300.5V1326.5H1316.5V1326.5H1331.5V1325.5H1347.5V1325.5H1363.5V1324.5H1379.5V1324.5H1395.5V1323.5H1411.5V1339.5H1415.5V1336.5H1430.5V1336.5H1444.5V1335.5H1458.5V1335.5H1473.5V1334.5H1487.5V1334.5H1502.5V1333.5H1516.5V1333.5H1531.5V1332.5H1545.5V1332.5H1560.5V1331.5H1574.5V1331.5H1589.5V1330.5H1603.5V1330.5H1617.5V1329.5H1632.5V1329.5H1646.5V1328.5H1661.5V1328.5H1675.5V1327.5H1690.5V1327.5H1704.5V1327.5H1719.5V1326.5H1733.5V1326.5H1745.5V1324.5H1749" fill="none" stroke="#0a7ac3" stroke-width="1" shape-rendering="crispEdges"/>
<path d="M956 1133.5H1749M1748.5 1133V1352M956 1351.5H1749" stroke="#8d9ea8" stroke-width="1" fill="none" shape-rendering="crispEdges"/>
</svg>
<div class="abs" style="left:993px;top:565px;width:81px;height:53px;background:#fcfcfc;border:1px solid #767676;box-shadow:2px 2px 2px rgba(0,0,0,.45);color:#6a6a6a;font-size:16.5px;line-height:25.4px;padding:1.5px 0 0 5.5px;white-space:pre">0.713 V
21:13:01</div>
<div class="win" style="left:1858px;top:0px;width:691px;height:1379px;background:#fff;border-left:1px solid #8a8a8a;border-top:1px solid #555;box-shadow:0 0 10px rgba(0,0,0,.35)">
<svg width="0" height="0" style="left:0;top:0"><defs>
<linearGradient id="gbolt" x1="0" y1="0" x2="1" y2="1"><stop offset="0" stop-color="#f7b733"/><stop offset=".5" stop-color="#f9a51a"/><stop offset="1" stop-color="#fbd65a"/></linearGradient>
<linearGradient id="gchip" x1="0" y1="0" x2="1" y2="0"><stop offset="0" stop-color="#4a4a4a"/><stop offset="1" stop-color="#666"/></linearGradient>
<g id="i-temp"><rect x="17.8" y="2.4" width="2.6" height="5" rx="1.2" fill="#b4cdc4"/><rect x="17.9" y="7" width="2.4" height="11" fill="#d23b45"/><rect x="18.3" y="7" width=".9" height="11" fill="#e87078"/><circle cx="19.1" cy="19.6" r="2.9" fill="#cf1f2c"/><circle cx="18.5" cy="19" r=".9" fill="#e96a72"/></g>
<g id="i-pow"><path d="M16 0.6H25L21.8 9L22.8 11.4L14 23L17 13.4L13.8 9.6Z" fill="url(#gbolt)" stroke="#a5801f" stroke-width=".8" stroke-linejoin="round"/></g>
<g id="i-clk"><circle cx="19" cy="13.2" r="8.2" fill="#c9c9c9" opacity=".5"/><circle cx="19" cy="12.6" r="7.9" fill="#e9e9e9" stroke="#3c3c3c" stroke-width="1.7"/><path d="M19 12.6L16.6 10.4M19 12.6H24.6" stroke="#222" stroke-width="1.2" fill="none" stroke-linecap="round"/></g>
<g id="i-chip"><rect x="13.2" y="2.3" width="11.6" height="20.2" rx="1" fill="url(#gchip)"/><path d="M11 5.5h1.6M11 10h1.6M11 14.6h1.6M11 19h1.6M25.6 5.5h1.6M25.6 10h1.6M25.6 14.6h1.6M25.6 19h1.6" stroke="#777" stroke-width="1.6"/></g>
<g id="i-fan"><rect x="10.5" y="3.2" width="17.2" height="17.4" rx="2.2" fill="#4b4b4b"/><circle cx="19.1" cy="11.9" r="7.4" fill="#5e5e5e"/><path d="M19.1 11.9L19.1 4.8M19.1 11.9L24.3 6.7M19.1 11.9L26.2 11.9M19.1 11.9L24.3 17.1M19.1 11.9L19.1 19M19.1 11.9L13.9 17.1M19.1 11.9L12 11.9M19.1 11.9L13.9 6.7" stroke="#f2f2f2" stroke-width="1.7"/><circle cx="19.1" cy="11.9" r="2.2" fill="#d9a5ae"/></g>
</defs></svg>
<svg style="left:12px;top:10px" width="23" height="23" viewBox="0 0 23 23"><defs><linearGradient id="ghw" x1="0" y1="0" x2="0" y2="1"><stop offset="0" stop-color="#5fb5ea"/><stop offset=".62" stop-color="#0d5f9e"/><stop offset=".63" stop-color="#111"/><stop offset="1" stop-color="#1c1c1c"/></linearGradient></defs><rect x=".5" y=".5" width="22" height="22" rx="3.5" fill="url(#ghw)"/><path d="M6.500 3v10.500M12 6.500v7M6.500 16v4.500M12 16v4.500M17 16v4.500" stroke="#fff" stroke-width="2.700"/><circle cx="17" cy="11.500" r="1.500" fill="#fff"/></svg>
<div class="tt" style="left:41px;top:11px;font-size:17.6px;line-height:24px;color:#999">HWiNFO64 v6.08-3830 Sensor Status [165 values hid...</div>
<svg style="left:500px;top:8px" width="180" height="30" viewBox="0 0 180 30"><path d="M7.5 14.5H22.5M78.5 7.5h14v14h-14zM149 7l15 15M164 7l-15 15" stroke="#7a7a7a" stroke-width="1" fill="none"/></svg>
<div class="abs" style="left:0;top:44px;width:690px;height:1px;background:#9a9a9a"></div>
<div class="abs tah" style="left:0;top:46px;width:686px;height:25px;font-size:16px;line-height:25px;color:#111">
<span class="abs" style="left:8px;top:0.5px">Sensor</span>
<span class="abs" style="right:334px;top:0.5px">Current</span>
<span class="abs" style="right:225px;top:0.5px">Minimum</span>
<span class="abs" style="right:120.5px;top:0.5px">Maximum</span>
<span class="abs" style="right:7px;top:0.5px">Average</span>
<span class="abs" style="left:252px;top:0;width:1px;height:25px;background:#e9e9e9"></span>
<span class="abs" style="left:358px;top:0;width:1px;height:25px;background:#e9e9e9"></span>
<span class="abs" style="left:466px;top:0;width:1px;height:25px;background:#e9e9e9"></span>
<span class="abs" style="left:571px;top:0;width:1px;height:25px;background:#e9e9e9"></span>
<span class="abs" style="left:685px;top:0;width:1px;height:25px;background:#e9e9e9"></span>
</div>
<div class="abs tah" style="left:0;top:71px;width:686px;height:25px;font-size:16px;line-height:25px;color:#000;white-space:pre">
<span class="abs" style="left:30px;top:0;width:656px;height:24px;background:#d9d9d9"></span>
<svg style="left:-1px;top:0" width="30" height="25" viewBox="0 0 30 25"><use href="#i-chip"/></svg>
<span class="abs" style="left:34.5px;top:0.5px;font-style:italic;">CPU [#0]: Intel Core i7-782...</span>
<span class="abs" style="left:252px;top:0;width:2px;height:25px;background:#fff"></span>
<span class="abs" style="left:358px;top:0;width:2px;height:25px;background:#fff"></span>
<span class="abs" style="left:466px;top:0;width:2px;height:25px;background:#fff"></span>
<span class="abs" style="left:571px;top:0;width:2px;height:25px;background:#fff"></span>
</div>
<div class="abs tah" style="left:0;top:96px;width:686px;height:25px;font-size:16px;line-height:25px;color:#000;white-space:pre">
<span class="abs" style="left:30px;top:0;width:656px;height:25px;background:#efefef"></span>
<svg style="left:-1px;top:0" width="30" height="25" viewBox="0 0 30 25"><use href="#i-temp"/></svg>
<span class="abs" style="left:32.8px;top:0.5px;">Core Max</span>
<span class="abs" style="right:334px;top:0.5px;">57 °C</span>
<span class="abs" style="right:225px;top:0.5px;">32 °C</span>
<span class="abs" style="right:120.5px;top:0.5px;">60 °C</span>
<span class="abs" style="right:7px;top:0.5px;">55 °C</span>
</div>
<div class="abs tah" style="left:0;top:121px;width:686px;height:25px;font-size:16px;line-height:25px;color:#000;white-space:pre">
<svg style="left:-1px;top:0" width="30" height="25" viewBox="0 0 30 25"><use href="#i-temp"/></svg>
<span class="abs" style="left:32.8px;top:0.5px;font-weight:bold;">Core #0</span>
<span class="abs" style="right:334px;top:0.5px;font-weight:bold;">54 °C</span>
<span class="abs" style="right:225px;top:0.5px;font-weight:bold;">32 °C</span>
<span class="abs" style="right:120.5px;top:0.5px;font-weight:bold;">59 °C</span>
<span class="abs" style="right:7px;top:0.5px;font-weight:bold;">49 °C</span>
<span class="abs" style="left:252px;top:0;width:1px;height:25px;background:#f1f1f1"></span>
<span class="abs" style="left:358px;top:0;width:1px;height:25px;background:#f1f1f1"></span>
<span class="abs" style="left:466px;top:0;width:1px;height:25px;background:#f1f1f1"></span>
<span class="abs" style="left:571px;top:0;width:1px;height:25px;background:#f1f1f1"></span>
</div>
<div class="abs tah" style="left:0;top:146px;width:686px;height:25px;font-size:16px;line-height:25px;color:#000;white-space:pre">
<span class="abs" style="left:30px;top:0;width:656px;height:25px;background:#efefef"></span>
<svg style="left:-1px;top:0" width="30" height="25" viewBox="0 0 30 25"><use href="#i-temp"/></svg>
<span class="abs" style="left:32.8px;top:0.5px;font-weight:bold;">Core #1</span>
<span class="abs" style="right:334px;top:0.5px;font-weight:bold;">48 °C</span>
<span class="abs" style="right:225px;top:0.5px;font-weight:bold;">31 °C</span>
<span class="abs" style="right:120.5px;top:0.5px;font-weight:bold;">60 °C</span>
<span class="abs" style="right:7px;top:0.5px;font-weight:bold;">48 °C</span>
</div>
<div class="abs tah" style="left:0;top:171px;width:686px;height:25px;font-size:16px;line-height:25px;color:#000;white-space:pre">
<svg style="left:-1px;top:0" width="30" height="25" viewBox="0 0 30 25"><use href="#i-temp"/></svg>
<span class="abs" style="left:32.8px;top:0.5px;font-weight:bold;">Core #2</span>
<span class="abs" style="right:334px;top:0.5px;font-weight:bold;">48 °C</span>
<span class="abs" style="right:225px;top:0.5px;font-weight:bold;">31 °C</span>
<span class="abs" style="right:120.5px;top:0.5px;font-weight:bold;">60 °C</span>
<span class="abs" style="right:7px;top:0.5px;font-weight:bold;">50 °C</span>
<span class="abs" style="left:252px;top:0;width:1px;height:25px;background:#f1f1f1"></span>
<span class="abs" style="left:358px;top:0;width:1px;height:25px;background:#f1f1f1"></span>
<span class="abs" style="left:466px;top:0;width:1px;height:25px;background:#f1f1f1"></span>
<span class="abs" style="left:571px;top:0;width:1px;height:25px;background:#f1f1f1"></span>
</div>
<div class="abs tah" style="left:0;top:196px;width:686px;height:25px;font-size:16px;line-height:25px;color:#000;white-space:pre">
<span class="abs" style="left:30px;top:0;width:656px;height:25px;background:#efefef"></span>
<svg style="left:-1px;top:0" width="30" height="25" viewBox="0 0 30 25"><use href="#i-temp"/></svg>
<span class="abs" style="left:32.8px;top:0.5px;font-weight:bold;">Core #3</span>
<span class="abs" style="right:334px;top:0.5px;font-weight:bold;">57 °C</span>
<span class="abs" style="right:225px;top:0.5px;font-weight:bold;">31 °C</span>
<span class="abs" style="right:120.5px;top:0.5px;font-weight:bold;">59 °C</span>
<span class="abs" style="right:7px;top:0.5px;font-weight:bold;">51 °C</span>
</div>
<div class="abs tah" style="left:0;top:221px;width:686px;height:25px;font-size:16px;line-height:25px;color:#000;white-space:pre">
<svg style="left:-1px;top:0" width="30" height="25" viewBox="0 0 30 25"><use href="#i-pow"/></svg>
<span class="abs" style="left:32.8px;top:0.5px;">CPU Package Power</span>
<span class="abs" style="right:334px;top:0.5px;">32.092 W</span>
<span class="abs" style="right:225px;top:0.5px;">8.713 W</span>
<span class="abs" style="right:120.5px;top:0.5px;">32.092 W</span>
<span class="abs" style="right:7px;top:0.5px;">23.549 W</span>
<span class="abs" style="left:252px;top:0;width:1px;height:25px;background:#f1f1f1"></span>
<span class="abs" style="left:358px;top:0;width:1px;height:25px;background:#f1f1f1"></span>
<span class="abs" style="left:466px;top:0;width:1px;height:25px;background:#f1f1f1"></span>
<span class="abs" style="left:571px;top:0;width:1px;height:25px;background:#f1f1f1"></span>
</div>
<div class="abs tah" style="left:0;top:246px;width:686px;height:25px;font-size:16px;line-height:25px;color:#000;white-space:pre">
<span class="abs" style="left:30px;top:0;width:656px;height:25px;background:#efefef"></span>
<svg style="left:-1px;top:0" width="30" height="25" viewBox="0 0 30 25"><use href="#i-pow"/></svg>
<span class="abs" style="left:32.8px;top:0.5px;">Core #0 VID</span>
<span class="abs" style="right:334px;top:0.5px;">1.200 V</span>
<span class="abs" style="right:225px;top:0.5px;">0.564 V</span>
<span class="abs" style="right:120.5px;top:0.5px;">1.230 V</span>
<span class="abs" style="right:7px;top:0.5px;">1.150 V</span>
</div>
<div class="abs tah" style="left:0;top:271px;width:686px;height:25px;font-size:16px;line-height:25px;color:#000;white-space:pre">
<svg style="left:-1px;top:0" width="30" height="25" viewBox="0 0 30 25"><use href="#i-pow"/></svg>
<span class="abs" style="left:32.8px;top:0.5px;">Core #1 VID</span>
<span class="abs" style="right:334px;top:0.5px;">1.203 V</span>
<span class="abs" style="right:225px;top:0.5px;">0.569 V</span>
<span class="abs" style="right:120.5px;top:0.5px;">1.220 V</span>
<span class="abs" style="right:7px;top:0.5px;">1.157 V</span>
<span class="abs" style="left:252px;top:0;width:1px;height:25px;background:#f1f1f1"></span>
<span class="abs" style="left:358px;top:0;width:1px;height:25px;background:#f1f1f1"></span>
<span class="abs" style="left:466px;top:0;width:1px;height:25px;background:#f1f1f1"></span>
<span class="abs" style="left:571px;top:0;width:1px;height:25px;background:#f1f1f1"></span>
</div>
<div class="abs tah" style="left:0;top:296px;width:686px;height:25px;font-size:16px;line-height:25px;color:#000;white-space:pre">
<span class="abs" style="left:30px;top:0;width:656px;height:25px;background:#efefef"></span>
<svg style="left:-1px;top:0" width="30" height="25" viewBox="0 0 30 25"><use href="#i-pow"/></svg>
<span class="abs" style="left:32.8px;top:0.5px;">Core #2 VID</span>
<span class="abs" style="right:334px;top:0.5px;">1.208 V</span>
<span class="abs" style="right:225px;top:0.5px;">0.568 V</span>
<span class="abs" style="right:120.5px;top:0.5px;">1.224 V</span>
<span class="abs" style="right:7px;top:0.5px;">1.153 V</span>
</div>
<div class="abs tah" style="left:0;top:321px;width:686px;height:25px;font-size:16px;line-height:25px;color:#000;white-space:pre">
<svg style="left:-1px;top:0" width="30" height="25" viewBox="0 0 30 25"><use href="#i-pow"/></svg>
<span class="abs" style="left:32.8px;top:0.5px;">Core #3 VID</span>
<span class="abs" style="right:334px;top:0.5px;">1.207 V</span>
<span class="abs" style="right:225px;top:0.5px;">0.568 V</span>
<span class="abs" style="right:120.5px;top:0.5px;">1.221 V</span>
<span class="abs" style="right:7px;top:0.5px;">1.153 V</span>
<span class="abs" style="left:252px;top:0;width:1px;height:25px;background:#f1f1f1"></span>
<span class="abs" style="left:358px;top:0;width:1px;height:25px;background:#f1f1f1"></span>
<span class="abs" style="left:466px;top:0;width:1px;height:25px;background:#f1f1f1"></span>
<span class="abs" style="left:571px;top:0;width:1px;height:25px;background:#f1f1f1"></span>
</div>
<div class="abs tah" style="left:0;top:346px;width:686px;height:25px;font-size:16px;line-height:25px;color:#000;white-space:pre">
<span class="abs" style="left:30px;top:0;width:656px;height:25px;background:#efefef"></span>
<svg style="left:-1px;top:0" width="30" height="25" viewBox="0 0 30 25"><use href="#i-pow"/></svg>
<span class="abs" style="left:32.8px;top:0.5px;">IA Voltage Offset</span>
<span class="abs" style="right:334px;top:0.5px;">-0.080 V</span>
<span class="abs" style="right:225px;top:0.5px;">-0.080 V</span>
<span class="abs" style="right:120.5px;top:0.5px;">-0.080 V</span>
<span class="abs" style="right:7px;top:0.5px;">-0.080 V</span>
</div>
<div class="abs tah" style="left:0;top:371px;width:686px;height:25px;font-size:16px;line-height:25px;color:#000;white-space:pre">
<svg style="left:-1px;top:0" width="30" height="25" viewBox="0 0 30 25"><use href="#i-pow"/></svg>
<span class="abs" style="left:32.8px;top:0.5px;">CLR (CBo/LLC/Ring) Voltage...</span>
<span class="abs" style="right:334px;top:0.5px;">-0.080 V</span>
<span class="abs" style="right:225px;top:0.5px;">-0.080 V</span>
<span class="abs" style="right:120.5px;top:0.5px;">-0.080 V</span>
<span class="abs" style="right:7px;top:0.5px;">-0.080 V</span>
<span class="abs" style="left:252px;top:0;width:1px;height:25px;background:#f1f1f1"></span>
<span class="abs" style="left:358px;top:0;width:1px;height:25px;background:#f1f1f1"></span>
<span class="abs" style="left:466px;top:0;width:1px;height:25px;background:#f1f1f1"></span>
<span class="abs" style="left:571px;top:0;width:1px;height:25px;background:#f1f1f1"></span>
</div>
<div class="abs tah" style="left:0;top:396px;width:686px;height:25px;font-size:16px;line-height:25px;color:#000;white-space:pre">
<span class="abs" style="left:30px;top:0;width:656px;height:25px;background:#efefef"></span>
<svg style="left:-1px;top:0" width="30" height="25" viewBox="0 0 30 25"><use href="#i-pow"/></svg>
<span class="abs" style="left:32.8px;top:0.5px;">GT (Unslice) Voltage Offset</span>
<span class="abs" style="right:334px;top:0.5px;">0.000 V</span>
<span class="abs" style="right:225px;top:0.5px;">0.000 V</span>
<span class="abs" style="right:120.5px;top:0.5px;">0.000 V</span>
<span class="abs" style="right:7px;top:0.5px;">0.000 V</span>
</div>
<div class="abs tah" style="left:0;top:421px;width:686px;height:25px;font-size:16px;line-height:25px;color:#000;white-space:pre">
<svg style="left:-1px;top:0" width="30" height="25" viewBox="0 0 30 25"><use href="#i-clk"/></svg>
<span class="abs" style="left:32.8px;top:0.5px;">Total CPU Usage</span>
<span class="abs" style="right:334px;top:0.5px;">24.0 %</span>
<span class="abs" style="right:225px;top:0.5px;">4.7 %</span>
<span class="abs" style="right:120.5px;top:0.5px;">24.0 %</span>
<span class="abs" style="right:7px;top:0.5px;">15.6 %</span>
<span class="abs" style="left:252px;top:0;width:1px;height:25px;background:#f1f1f1"></span>
<span class="abs" style="left:358px;top:0;width:1px;height:25px;background:#f1f1f1"></span>
<span class="abs" style="left:466px;top:0;width:1px;height:25px;background:#f1f1f1"></span>
<span class="abs" style="left:571px;top:0;width:1px;height:25px;background:#f1f1f1"></span>
</div>
<div class="abs tah" style="left:0;top:446px;width:686px;height:25px;font-size:16px;line-height:25px;color:#000;white-space:pre">
<span class="abs" style="left:30px;top:0;width:656px;height:25px;background:#efefef"></span>
<svg style="left:-1px;top:0" width="30" height="25" viewBox="0 0 30 25"><use href="#i-clk"/></svg>
<span class="abs" style="left:32.8px;top:0.5px;">Core #0 Ratio</span>
<span class="abs" style="right:334px;top:0.5px;">41 x</span>
<span class="abs" style="right:225px;top:0.5px;">8 x</span>
<span class="abs" style="right:120.5px;top:0.5px;">41 x</span>
<span class="abs" style="right:7px;top:0.5px;">39 x</span>
</div>
<div class="abs tah" style="left:0;top:471px;width:686px;height:25px;font-size:16px;line-height:25px;color:#000;white-space:pre">
<svg style="left:-1px;top:0" width="30" height="25" viewBox="0 0 30 25"><use href="#i-clk"/></svg>
<span class="abs" style="left:32.8px;top:0.5px;">Core #1 Ratio</span>
<span class="abs" style="right:334px;top:0.5px;">41 x</span>
<span class="abs" style="right:225px;top:0.5px;">8 x</span>
<span class="abs" style="right:120.5px;top:0.5px;">41 x</span>
<span class="abs" style="right:7px;top:0.5px;">39 x</span>
<span class="abs" style="left:252px;top:0;width:1px;height:25px;background:#f1f1f1"></span>
<span class="abs" style="left:358px;top:0;width:1px;height:25px;background:#f1f1f1"></span>
<span class="abs" style="left:466px;top:0;width:1px;height:25px;background:#f1f1f1"></span>
<span class="abs" style="left:571px;top:0;width:1px;height:25px;background:#f1f1f1"></span>
</div>
<div class="abs tah" style="left:0;top:496px;width:686px;height:25px;font-size:16px;line-height:25px;color:#000;white-space:pre">
<span class="abs" style="left:30px;top:0;width:656px;height:25px;background:#efefef"></span>
<svg style="left:-1px;top:0" width="30" height="25" viewBox="0 0 30 25"><use href="#i-clk"/></svg>
<span class="abs" style="left:32.8px;top:0.5px;">Core #2 Ratio</span>
<span class="abs" style="right:334px;top:0.5px;">41 x</span>
<span class="abs" style="right:225px;top:0.5px;">8 x</span>
<span class="abs" style="right:120.5px;top:0.5px;">41 x</span>
<span class="abs" style="right:7px;top:0.5px;">39 x</span>
</div>
<div class="abs tah" style="left:0;top:521px;width:686px;height:25px;font-size:16px;line-height:25px;color:#000;white-space:pre">
<svg style="left:-1px;top:0" width="30" height="25" viewBox="0 0 30 25"><use href="#i-clk"/></svg>
<span class="abs" style="left:32.8px;top:0.5px;">Core #3 Ratio</span>
<span class="abs" style="right:334px;top:0.5px;">41 x</span>
<span class="abs" style="right:225px;top:0.5px;">8 x</span>
<span class="abs" style="right:120.5px;top:0.5px;">41 x</span>
<span class="abs" style="right:7px;top:0.5px;">39 x</span>
<span class="abs" style="left:252px;top:0;width:1px;height:25px;background:#f1f1f1"></span>
<span class="abs" style="left:358px;top:0;width:1px;height:25px;background:#f1f1f1"></span>
<span class="abs" style="left:466px;top:0;width:1px;height:25px;background:#f1f1f1"></span>
<span class="abs" style="left:571px;top:0;width:1px;height:25px;background:#f1f1f1"></span>
</div>
<div class="abs tah" style="left:0;top:546px;width:686px;height:25px;font-size:16px;line-height:25px;color:#000;white-space:pre">
<span class="abs" style="left:30px;top:0;width:656px;height:25px;background:#efefef"></span>
<svg style="left:-1px;top:0" width="30" height="25" viewBox="0 0 30 25"><use href="#i-clk"/></svg>
<span class="abs" style="left:32.8px;top:0.5px;">Core #0 Clock</span>
<span class="abs" style="right:334px;top:0.5px;">4,089.0 MHz</span>
<span class="abs" style="right:225px;top:0.5px;">797.7 MHz</span>
<span class="abs" style="right:120.5px;top:0.5px;">4,093.0 MHz</span>
<span class="abs" style="right:7px;top:0.5px;">3,897.1 MHz</span>
</div>
<div class="abs tah" style="left:0;top:571px;width:686px;height:25px;font-size:16px;line-height:25px;color:#000;white-space:pre">
<svg style="left:-1px;top:0" width="30" height="25" viewBox="0 0 30 25"><use href="#i-clk"/></svg>
<span class="abs" style="left:32.8px;top:0.5px;">Core #1 Clock</span>
<span class="abs" style="right:334px;top:0.5px;">4,089.0 MHz</span>
<span class="abs" style="right:225px;top:0.5px;">797.7 MHz</span>
<span class="abs" style="right:120.5px;top:0.5px;">4,093.0 MHz</span>
<span class="abs" style="right:7px;top:0.5px;">3,895.9 MHz</span>
<span class="abs" style="left:252px;top:0;width:1px;height:25px;background:#f1f1f1"></span>
<span class="abs" style="left:358px;top:0;width:1px;height:25px;background:#f1f1f1"></span>
<span class="abs" style="left:466px;top:0;width:1px;height:25px;background:#f1f1f1"></span>
<span class="abs" style="left:571px;top:0;width:1px;height:25px;background:#f1f1f1"></span>
</div>
<div class="abs tah" style="left:0;top:596px;width:686px;height:25px;font-size:16px;line-height:25px;color:#000;white-space:pre">
<span class="abs" style="left:30px;top:0;width:656px;height:25px;background:#efefef"></span>
<svg style="left:-1px;top:0" width="30" height="25" viewBox="0 0 30 25"><use href="#i-clk"/></svg>
<span class="abs" style="left:32.8px;top:0.5px;">Core #2 Clock</span>
<span class="abs" style="right:334px;top:0.5px;">4,089.0 MHz</span>
<span class="abs" style="right:225px;top:0.5px;">797.7 MHz</span>
<span class="abs" style="right:120.5px;top:0.5px;">4,093.0 MHz</span>
<span class="abs" style="right:7px;top:0.5px;">3,880.8 MHz</span>
</div>
<div class="abs tah" style="left:0;top:621px;width:686px;height:25px;font-size:16px;line-height:25px;color:#000;white-space:pre">
<svg style="left:-1px;top:0" width="30" height="25" viewBox="0 0 30 25"><use href="#i-clk"/></svg>
<span class="abs" style="left:32.8px;top:0.5px;">Core #3 Clock</span>
<span class="abs" style="right:334px;top:0.5px;">4,089.0 MHz</span>
<span class="abs" style="right:225px;top:0.5px;">797.7 MHz</span>
<span class="abs" style="right:120.5px;top:0.5px;">4,093.0 MHz</span>
<span class="abs" style="right:7px;top:0.5px;">3,884.9 MHz</span>
<span class="abs" style="left:252px;top:0;width:1px;height:25px;background:#f1f1f1"></span>
<span class="abs" style="left:358px;top:0;width:1px;height:25px;background:#f1f1f1"></span>
<span class="abs" style="left:466px;top:0;width:1px;height:25px;background:#f1f1f1"></span>
<span class="abs" style="left:571px;top:0;width:1px;height:25px;background:#f1f1f1"></span>
</div>
<div class="abs tah" style="left:0;top:646px;width:686px;height:25px;font-size:16px;line-height:25px;color:#000;white-space:pre">
<span class="abs" style="left:30px;top:0;width:656px;height:25px;background:#efefef"></span>
<svg style="left:-1px;top:0" width="30" height="25" viewBox="0 0 30 25"><use href="#i-clk"/></svg>
<span class="abs" style="left:32.8px;top:0.5px;">Package/Ring Thermal Throt...</span>
<span class="abs" style="right:334px;top:0.5px;">No</span>
<span class="abs" style="right:225px;top:0.5px;">No</span>
<span class="abs" style="right:120.5px;top:0.5px;">No</span>
</div>
<div class="abs tah" style="left:0;top:671px;width:686px;height:25px;font-size:16px;line-height:25px;color:#000;white-space:pre">
<svg style="left:-1px;top:0" width="30" height="25" viewBox="0 0 30 25"><use href="#i-clk"/></svg>
<span class="abs" style="left:32.8px;top:0.5px;">Package/Ring Power Limit E...</span>
<span class="abs" style="right:334px;top:0.5px;">No</span>
<span class="abs" style="right:225px;top:0.5px;">No</span>
<span class="abs" style="right:120.5px;top:0.5px;">No</span>
<span class="abs" style="left:252px;top:0;width:1px;height:25px;background:#f1f1f1"></span>
<span class="abs" style="left:358px;top:0;width:1px;height:25px;background:#f1f1f1"></span>
<span class="abs" style="left:466px;top:0;width:1px;height:25px;background:#f1f1f1"></span>
<span class="abs" style="left:571px;top:0;width:1px;height:25px;background:#f1f1f1"></span>
</div>
<div class="abs tah" style="left:0;top:696px;width:686px;height:25px;font-size:16px;line-height:25px;color:#000;white-space:pre">
<span class="abs" style="left:30px;top:0;width:656px;height:25px;background:#efefef"></span>
</div>
<div class="abs tah" style="left:0;top:721px;width:686px;height:25px;font-size:16px;line-height:25px;color:#000;white-space:pre">
<span class="abs" style="left:30px;top:0;width:656px;height:24px;background:#d9d9d9"></span>
<svg style="left:-1px;top:0" width="30" height="25" viewBox="0 0 30 25"><use href="#i-chip"/></svg>
<span class="abs" style="left:34.5px;top:0.5px;font-style:italic;">GPU [#1]: NVIDIA GeForce ...</span>
<span class="abs" style="left:252px;top:0;width:2px;height:25px;background:#fff"></span>
<span class="abs" style="left:358px;top:0;width:2px;height:25px;background:#fff"></span>
<span class="abs" style="left:466px;top:0;width:2px;height:25px;background:#fff"></span>
<span class="abs" style="left:571px;top:0;width:2px;height:25px;background:#fff"></span>
</div>
<div class="abs tah" style="left:0;top:746px;width:686px;height:25px;font-size:16px;line-height:25px;color:#000;white-space:pre">
<span class="abs" style="left:30px;top:0;width:656px;height:25px;background:#efefef"></span>
<svg style="left:-1px;top:0" width="30" height="25" viewBox="0 0 30 25"><use href="#i-temp"/></svg>
<span class="abs" style="left:32.8px;top:0.5px;font-weight:bold;">GPU Temperature</span>
<span class="abs" style="right:334px;top:0.5px;font-weight:bold;">45 °C</span>
<span class="abs" style="right:225px;top:0.5px;font-weight:bold;">33 °C</span>
<span class="abs" style="right:120.5px;top:0.5px;font-weight:bold;">49 °C</span>
<span class="abs" style="right:7px;top:0.5px;font-weight:bold;">45 °C</span>
</div>
<div class="abs tah" style="left:0;top:771px;width:686px;height:25px;font-size:16px;line-height:25px;color:#000;white-space:pre">
<svg style="left:-1px;top:0" width="30" height="25" viewBox="0 0 30 25"><use href="#i-pow"/></svg>
<span class="abs" style="left:32.8px;top:0.5px;">GPU Power</span>
<span class="abs" style="right:334px;top:0.5px;">51.302 W</span>
<span class="abs" style="right:225px;top:0.5px;">7.566 W</span>
<span class="abs" style="right:120.5px;top:0.5px;">74.810 W</span>
<span class="abs" style="right:7px;top:0.5px;">60.360 W</span>
<span class="abs" style="left:252px;top:0;width:1px;height:25px;background:#f1f1f1"></span>
<span class="abs" style="left:358px;top:0;width:1px;height:25px;background:#f1f1f1"></span>
<span class="abs" style="left:466px;top:0;width:1px;height:25px;background:#f1f1f1"></span>
<span class="abs" style="left:571px;top:0;width:1px;height:25px;background:#f1f1f1"></span>
</div>
<div class="abs tah" style="left:0;top:796px;width:686px;height:25px;font-size:16px;line-height:25px;color:#000;white-space:pre">
<span class="abs" style="left:30px;top:0;width:656px;height:25px;background:#efefef"></span>
<svg style="left:-1px;top:0" width="30" height="25" viewBox="0 0 30 25"><use href="#i-pow"/></svg>
<span class="abs" style="left:32.8px;top:0.5px;">GPU Core Voltage</span>
<span class="abs" style="right:334px;top:0.5px;">0.813 V</span>
<span class="abs" style="right:225px;top:0.5px;">0.594 V</span>
<span class="abs" style="right:120.5px;top:0.5px;">1.063 V</span>
<span class="abs" style="right:7px;top:0.5px;">0.750 V</span>
</div>
<div class="abs tah" style="left:0;top:821px;width:686px;height:25px;font-size:16px;line-height:25px;color:#000;white-space:pre">
<svg style="left:-1px;top:0" width="30" height="25" viewBox="0 0 30 25"><use href="#i-clk"/></svg>
<span class="abs" style="left:32.8px;top:0.5px;">GPU Clock</span>
<span class="abs" style="right:334px;top:0.5px;">1,670.5 MHz</span>
<span class="abs" style="right:225px;top:0.5px;">139.0 MHz</span>
<span class="abs" style="right:120.5px;top:0.5px;">1,898.0 MHz</span>
<span class="abs" style="right:7px;top:0.5px;">1,437.6 MHz</span>
<span class="abs" style="left:252px;top:0;width:1px;height:25px;background:#f1f1f1"></span>
<span class="abs" style="left:358px;top:0;width:1px;height:25px;background:#f1f1f1"></span>
<span class="abs" style="left:466px;top:0;width:1px;height:25px;background:#f1f1f1"></span>
<span class="abs" style="left:571px;top:0;width:1px;height:25px;background:#f1f1f1"></span>
</div>
<div class="abs tah" style="left:0;top:846px;width:686px;height:25px;font-size:16px;line-height:25px;color:#000;white-space:pre">
<span class="abs" style="left:30px;top:0;width:656px;height:25px;background:#efefef"></span>
<svg style="left:-1px;top:0" width="30" height="25" viewBox="0 0 30 25"><use href="#i-clk"/></svg>
<span class="abs" style="left:32.8px;top:0.5px;">GPU Memory Usage</span>
<span class="abs" style="right:334px;top:0.5px;">12.1 %</span>
<span class="abs" style="right:225px;top:0.5px;">5.7 %</span>
<span class="abs" style="right:120.5px;top:0.5px;">13.2 %</span>
<span class="abs" style="right:7px;top:0.5px;">9.6 %</span>
</div>
<div class="abs tah" style="left:0;top:871px;width:686px;height:25px;font-size:16px;line-height:25px;color:#000;white-space:pre">
<svg style="left:-1px;top:0" width="30" height="25" viewBox="0 0 30 25"><use href="#i-clk"/></svg>
<span class="abs" style="left:32.8px;top:0.5px;">GPU D3D Usage</span>
<span class="abs" style="right:334px;top:0.5px;">2.2 %</span>
<span class="abs" style="right:225px;top:0.5px;">0.3 %</span>
<span class="abs" style="right:120.5px;top:0.5px;">9.5 %</span>
<span class="abs" style="right:7px;top:0.5px;">0.8 %</span>
<span class="abs" style="left:252px;top:0;width:1px;height:25px;background:#f1f1f1"></span>
<span class="abs" style="left:358px;top:0;width:1px;height:25px;background:#f1f1f1"></span>
<span class="abs" style="left:466px;top:0;width:1px;height:25px;background:#f1f1f1"></span>
<span class="abs" style="left:571px;top:0;width:1px;height:25px;background:#f1f1f1"></span>
</div>
<div class="abs tah" style="left:0;top:896px;width:686px;height:25px;font-size:16px;line-height:25px;color:#000;white-space:pre">
<span class="abs" style="left:30px;top:0;width:656px;height:25px;background:#efefef"></span>
<svg style="left:-1px;top:0" width="30" height="25" viewBox="0 0 30 25"><use href="#i-clk"/></svg>
<span class="abs" style="left:32.8px;top:0.5px;">GPU Core Load</span>
<span class="abs" style="right:334px;top:0.5px;">46.0 %</span>
<span class="abs" style="right:225px;top:0.5px;">0.0 %</span>
<span class="abs" style="right:120.5px;top:0.5px;">94.0 %</span>
<span class="abs" style="right:7px;top:0.5px;">65.6 %</span>
</div>
<div class="abs tah" style="left:0;top:921px;width:686px;height:25px;font-size:16px;line-height:25px;color:#000;white-space:pre">
<span class="abs" style="left:252px;top:0;width:1px;height:25px;background:#f1f1f1"></span>
<span class="abs" style="left:358px;top:0;width:1px;height:25px;background:#f1f1f1"></span>
<span class="abs" style="left:466px;top:0;width:1px;height:25px;background:#f1f1f1"></span>
<span class="abs" style="left:571px;top:0;width:1px;height:25px;background:#f1f1f1"></span>
</div>
<div class="abs tah" style="left:0;top:946px;width:686px;height:25px;font-size:16px;line-height:25px;color:#000;white-space:pre">
<span class="abs" style="left:30px;top:0;width:656px;height:24px;background:#d9d9d9"></span>
<svg style="left:-1px;top:0" width="30" height="25" viewBox="0 0 30 25"><use href="#i-chip"/></svg>
<span class="abs" style="left:34.5px;top:0.5px;font-style:italic;">COMPAL EC: Alienware 17 R4</span>
<span class="abs" style="left:252px;top:0;width:2px;height:25px;background:#fff"></span>
<span class="abs" style="left:358px;top:0;width:2px;height:25px;background:#fff"></span>
<span class="abs" style="left:466px;top:0;width:2px;height:25px;background:#fff"></span>
<span class="abs" style="left:571px;top:0;width:2px;height:25px;background:#fff"></span>
</div>
<div class="abs tah" style="left:0;top:971px;width:686px;height:25px;font-size:16px;line-height:25px;color:#000;white-space:pre">
<svg style="left:-1px;top:0" width="30" height="25" viewBox="0 0 30 25"><use href="#i-fan"/></svg>
<span class="abs" style="left:32.8px;top:0.5px;">CPU</span>
<span class="abs" style="right:334px;top:0.5px;">3,600 RPM</span>
<span class="abs" style="right:225px;top:0.5px;">2,200 RPM</span>
<span class="abs" style="right:120.5px;top:0.5px;">3,600 RPM</span>
<span class="abs" style="right:7px;top:0.5px;">3,022 RPM</span>
<span class="abs" style="left:252px;top:0;width:1px;height:25px;background:#f1f1f1"></span>
<span class="abs" style="left:358px;top:0;width:1px;height:25px;background:#f1f1f1"></span>
<span class="abs" style="left:466px;top:0;width:1px;height:25px;background:#f1f1f1"></span>
<span class="abs" style="left:571px;top:0;width:1px;height:25px;background:#f1f1f1"></span>
</div>
<div class="abs tah" style="left:0;top:996px;width:686px;height:25px;font-size:16px;line-height:25px;color:#000;white-space:pre">
<span class="abs" style="left:30px;top:0;width:656px;height:25px;background:#efefef"></span>
<svg style="left:-1px;top:0" width="30" height="25" viewBox="0 0 30 25"><use href="#i-fan"/></svg>
<span class="abs" style="left:32.8px;top:0.5px;">GPU1</span>
<span class="abs" style="right:334px;top:0.5px;">3,800 RPM</span>
<span class="abs" style="right:225px;top:0.5px;">2,500 RPM</span>
<span class="abs" style="right:120.5px;top:0.5px;">3,800 RPM</span>
<span class="abs" style="right:7px;top:0.5px;">3,203 RPM</span>
</div>
<div class="abs tah" style="left:0;top:1021px;width:686px;height:25px;font-size:16px;line-height:25px;color:#000;white-space:pre">
<span class="abs" style="left:252px;top:0;width:1px;height:25px;background:#f1f1f1"></span>
<span class="abs" style="left:358px;top:0;width:1px;height:25px;background:#f1f1f1"></span>
<span class="abs" style="left:466px;top:0;width:1px;height:25px;background:#f1f1f1"></span>
<span class="abs" style="left:571px;top:0;width:1px;height:25px;background:#f1f1f1"></span>
</div>
<div class="abs tah" style="left:0;top:1046px;width:686px;height:25px;font-size:16px;line-height:25px;color:#000;white-space:pre">
<span class="abs" style="left:30px;top:0;width:656px;height:24px;background:#d9d9d9"></span>
<svg style="left:-1px;top:0" width="30" height="25" viewBox="0 0 30 25"><use href="#i-chip"/></svg>
<span class="abs" style="left:34.5px;top:0.5px;font-style:italic;">System: Alienware 17 R4</span>
<span class="abs" style="left:252px;top:0;width:2px;height:25px;background:#fff"></span>
<span class="abs" style="left:358px;top:0;width:2px;height:25px;background:#fff"></span>
<span class="abs" style="left:466px;top:0;width:2px;height:25px;background:#fff"></span>
<span class="abs" style="left:571px;top:0;width:2px;height:25px;background:#fff"></span>
</div>
<div class="abs tah" style="left:0;top:1071px;width:686px;height:25px;font-size:16px;line-height:25px;color:#000;white-space:pre">
<svg style="left:-1px;top:0" width="30" height="25" viewBox="0 0 30 25"><use href="#i-temp"/></svg>
<span class="abs" style="left:32.8px;top:0.5px;">Drive Temperature SSD</span>
<span class="abs" style="right:334px;top:0.5px;">46 °C</span>
<span class="abs" style="right:225px;top:0.5px;">33 °C</span>
<span class="abs" style="right:120.5px;top:0.5px;">46 °C</span>
<span class="abs" style="right:7px;top:0.5px;">40 °C</span>
<span class="abs" style="left:252px;top:0;width:1px;height:25px;background:#f1f1f1"></span>
<span class="abs" style="left:358px;top:0;width:1px;height:25px;background:#f1f1f1"></span>
<span class="abs" style="left:466px;top:0;width:1px;height:25px;background:#f1f1f1"></span>
<span class="abs" style="left:571px;top:0;width:1px;height:25px;background:#f1f1f1"></span>
</div>
<div class="abs tah" style="left:0;top:1096px;width:686px;height:25px;font-size:16px;line-height:25px;color:#000;white-space:pre">
<span class="abs" style="left:30px;top:0;width:656px;height:25px;background:#efefef"></span>
<svg style="left:-1px;top:0" width="30" height="25" viewBox="0 0 30 25"><use href="#i-temp"/></svg>
<span class="abs" style="left:32.8px;top:0.5px;">Drive Temperature 2</span>
<span class="abs" style="right:334px;top:0.5px;">66 °C</span>
<span class="abs" style="right:225px;top:0.5px;">44 °C</span>
<span class="abs" style="right:120.5px;top:0.5px;">73 °C</span>
<span class="abs" style="right:7px;top:0.5px;">59 °C</span>
</div>
<div class="abs tah" style="left:0;top:1121px;width:686px;height:25px;font-size:16px;line-height:25px;color:#000;white-space:pre">
<svg style="left:-1px;top:0" width="30" height="25" viewBox="0 0 30 25"><use href="#i-temp"/></svg>
<span class="abs" style="left:32.8px;top:0.5px;">Drive Temperature HDD</span>
<span class="abs" style="right:334px;top:0.5px;">28 °C</span>
<span class="abs" style="right:225px;top:0.5px;">25 °C</span>
<span class="abs" style="right:120.5px;top:0.5px;">28 °C</span>
<span class="abs" style="right:7px;top:0.5px;">26 °C</span>
<span class="abs" style="left:252px;top:0;width:1px;height:25px;background:#f1f1f1"></span>
<span class="abs" style="left:358px;top:0;width:1px;height:25px;background:#f1f1f1"></span>
<span class="abs" style="left:466px;top:0;width:1px;height:25px;background:#f1f1f1"></span>
<span class="abs" style="left:571px;top:0;width:1px;height:25px;background:#f1f1f1"></span>
</div>
<div class="abs tah" style="left:0;top:1146px;width:686px;height:25px;font-size:16px;line-height:25px;color:#000;white-space:pre">
<span class="abs" style="left:30px;top:0;width:656px;height:25px;background:#efefef"></span>
<svg style="left:-1px;top:0" width="30" height="25" viewBox="0 0 30 25"><use href="#i-temp"/></svg>
<span class="abs" style="left:32.8px;top:0.5px;">PCH Temperature</span>
<span class="abs" style="right:334px;top:0.5px;">62.0 °C</span>
<span class="abs" style="right:225px;top:0.5px;">43.0 °C</span>
<span class="abs" style="right:120.5px;top:0.5px;">64.0 °C</span>
<span class="abs" style="right:7px;top:0.5px;">57.8 °C</span>
</div>
<div class="abs tah" style="left:0;top:1171px;width:686px;height:25px;font-size:16px;line-height:25px;color:#000;white-space:pre">
<span class="abs" style="left:252px;top:0;width:1px;height:25px;background:#f1f1f1"></span>
<span class="abs" style="left:358px;top:0;width:1px;height:25px;background:#f1f1f1"></span>
<span class="abs" style="left:466px;top:0;width:1px;height:25px;background:#f1f1f1"></span>
<span class="abs" style="left:571px;top:0;width:1px;height:25px;background:#f1f1f1"></span>
</div>
<div class="abs tah" style="left:0;top:1196px;width:686px;height:25px;font-size:16px;line-height:25px;color:#000;white-space:pre">
<span class="abs" style="left:30px;top:0;width:656px;height:24px;background:#d9d9d9"></span>
<svg style="left:-1px;top:0" width="30" height="25" viewBox="0 0 30 25"><use href="#i-chip"/></svg>
<span class="abs" style="left:34.5px;top:0.5px;font-style:italic;">Battery: COMPAL  PABAS02...</span>
<span class="abs" style="left:252px;top:0;width:2px;height:25px;background:#fff"></span>
<span class="abs" style="left:358px;top:0;width:2px;height:25px;background:#fff"></span>
<span class="abs" style="left:466px;top:0;width:2px;height:25px;background:#fff"></span>
<span class="abs" style="left:571px;top:0;width:2px;height:25px;background:#fff"></span>
</div>
<div class="abs tah" style="left:0;top:1221px;width:686px;height:25px;font-size:16px;line-height:25px;color:#000;white-space:pre">
<svg style="left:-1px;top:0" width="30" height="25" viewBox="0 0 30 25"><use href="#i-clk"/></svg>
<span class="abs" style="left:32.8px;top:0.5px;">Remaining Capacity</span>
<span class="abs" style="right:334px;top:0.5px;">66.679 Wh</span>
<span class="abs" style="right:225px;top:0.5px;">66.679 Wh</span>
<span class="abs" style="right:120.5px;top:0.5px;">66.679 Wh</span>
<span class="abs" style="right:7px;top:0.5px;">66.679 Wh</span>
<span class="abs" style="left:252px;top:0;width:1px;height:25px;background:#f1f1f1"></span>
<span class="abs" style="left:358px;top:0;width:1px;height:25px;background:#f1f1f1"></span>
<span class="abs" style="left:466px;top:0;width:1px;height:25px;background:#f1f1f1"></span>
<span class="abs" style="left:571px;top:0;width:1px;height:25px;background:#f1f1f1"></span>
</div>
<div class="abs tah" style="left:0;top:1246px;width:686px;height:25px;font-size:16px;line-height:25px;color:#000;white-space:pre">
<span class="abs" style="left:30px;top:0;width:656px;height:25px;background:#efefef"></span>
<svg style="left:-1px;top:0" width="30" height="25" viewBox="0 0 30 25"><use href="#i-clk"/></svg>
<span class="abs" style="left:32.8px;top:0.5px;">Charge Level</span>
<span class="abs" style="right:334px;top:0.5px;">100.0 %</span>
<span class="abs" style="right:225px;top:0.5px;">100.0 %</span>
<span class="abs" style="right:120.5px;top:0.5px;">100.0 %</span>
<span class="abs" style="right:7px;top:0.5px;">100.0 %</span>
</div>
<div class="abs tah" style="left:0;top:1271px;width:686px;height:25px;font-size:16px;line-height:25px;color:#000;white-space:pre">
<svg style="left:-1px;top:0" width="30" height="25" viewBox="0 0 30 25"><use href="#i-clk"/></svg>
<span class="abs" style="left:32.8px;top:0.5px;">Wear Level</span>
<span class="abs" style="right:334px;top:0.5px;">32.6 %</span>
<span class="abs" style="right:225px;top:0.5px;">32.6 %</span>
<span class="abs" style="right:120.5px;top:0.5px;">32.6 %</span>
<span class="abs" style="right:7px;top:0.5px;">32.6 %</span>
<span class="abs" style="left:252px;top:0;width:1px;height:25px;background:#f1f1f1"></span>
<span class="abs" style="left:358px;top:0;width:1px;height:25px;background:#f1f1f1"></span>
<span class="abs" style="left:466px;top:0;width:1px;height:25px;background:#f1f1f1"></span>
<span class="abs" style="left:571px;top:0;width:1px;height:25px;background:#f1f1f1"></span>
</div>
<div class="abs" style="left:0;top:1298px;width:690px;height:81px;background:#f0f0f0;border-top:1px solid #a0a0a0"></div>
<div class="abs" style="left:1px;top:1311px;width:63px;height:53px;background:#e1e1e1;border:1px solid #cfcfcf"></div>
<div class="abs" style="left:239px;top:1311px;width:63px;height:53px;background:#e1e1e1;border:1px solid #cfcfcf"></div>
<div class="abs" style="left:406px;top:1311px;width:63px;height:53px;background:#e1e1e1;border:1px solid #cfcfcf"></div>
<div class="abs" style="left:473px;top:1311px;width:63px;height:53px;background:#e1e1e1;border:1px solid #cfcfcf"></div>
<div class="abs" style="left:543px;top:1311px;width:63px;height:53px;background:#e1e1e1;border:1px solid #cfcfcf"></div>
<div class="abs" style="left:613px;top:1311px;width:63px;height:53px;background:#e1e1e1;border:1px solid #cfcfcf"></div>
<div class="abs" style="left:66px;top:1311px;width:63px;height:53px;background:#cccccc;border:1px solid #cfcfcf"></div>
<div class="abs tah" style="left:342px;top:1323px;font-size:16px;line-height:24px;color:#111">0:09:21</div>
<svg style="left:0;top:0" width="690" height="1379" viewBox="1859 1 690 1379">
<defs><linearGradient id="gbl" x1="0" y1="0" x2="0" y2="1"><stop offset="0" stop-color="#55b0ea"/><stop offset="1" stop-color="#1a7ccb"/></linearGradient><linearGradient id="ggear" x1="0" y1="0" x2="1" y2="1"><stop offset="0" stop-color="#e4e4e4"/><stop offset="1" stop-color="#9a9a9a"/></linearGradient><linearGradient id="gmon" x1="0" y1="0" x2="1" y2="1"><stop offset="0" stop-color="#7cc4f0"/><stop offset="1" stop-color="#1560b0"/></linearGradient></defs>
<path d="M1867 1340L1879.1 1328.0V1334.72H1889V1345.28H1879.1V1352.0Z" fill="url(#gbl)" stroke="#2a7fc4" stroke-width="1"/>
<path d="M1914 1340L1901.9 1328.0V1334.72H1892V1345.28H1901.9V1352.0Z" fill="url(#gbl)" stroke="#2a7fc4" stroke-width="1"/>
<path d="M1953 1340L1942.0 1329.0V1335.16H1933V1344.84H1942.0V1351.0Z" fill="#8cc3ec" stroke="#7ab4e0" stroke-width="1"/>
<path d="M1955 1340L1966.0 1329.0V1335.16H1975V1344.84H1966.0V1351.0Z" fill="#8cc3ec" stroke="#7ab4e0" stroke-width="1"/>
<g><rect x="1975" y="1320" width="36" height="36" rx="2" fill="#303030"/><circle cx="1993" cy="1338" r="16" fill="#cdcdcd"/><path d="M1998.0 1338.0Q2003.5 1343.8 2008.5 1342.0" stroke="#3a3a3a" stroke-width="2.600" fill="none"/><path d="M1996.8 1341.2Q1997.4 1349.2 2002.3 1351.0" stroke="#3a3a3a" stroke-width="2.600" fill="none"/><path d="M1993.9 1342.9Q1989.2 1349.4 1991.8 1354.0" stroke="#3a3a3a" stroke-width="2.600" fill="none"/><path d="M1990.5 1342.3Q1982.8 1344.2 1981.8 1349.4" stroke="#3a3a3a" stroke-width="2.600" fill="none"/><path d="M1988.3 1339.7Q1981.1 1336.2 1977.1 1339.6" stroke="#3a3a3a" stroke-width="2.600" fill="none"/><path d="M1988.3 1336.3Q1985.1 1329.0 1979.8 1329.0" stroke="#3a3a3a" stroke-width="2.600" fill="none"/><path d="M1990.5 1333.7Q1992.7 1326.0 1988.7 1322.6" stroke="#3a3a3a" stroke-width="2.600" fill="none"/><path d="M1993.9 1333.1Q2000.5 1328.6 1999.6 1323.4" stroke="#3a3a3a" stroke-width="2.600" fill="none"/><path d="M1996.8 1334.8Q2004.8 1335.6 2007.4 1331.1" stroke="#3a3a3a" stroke-width="2.600" fill="none"/><circle cx="1993" cy="1338" r="16" fill="none" stroke="#3a3a3a" stroke-width="1.500"/><circle cx="1993" cy="1338" r="4.600" fill="#d9b5bb" stroke="#8a8a8a" stroke-width="1"/></g>
<g><path d="M2128 1331H2139V1344" stroke="#555" stroke-width="1.5" fill="none"/><path d="M2107 1317L2128 1320L2125 1338L2104 1335Z" fill="url(#gmon)" stroke="#2a5d94" stroke-width="1"/><path d="M2112 1338l8 1l2 4h-13z" fill="#9aa3ac"/><path d="M2131 1337L2152 1340L2149 1358L2128 1355Z" fill="url(#gmon)" stroke="#2a5d94" stroke-width="1"/><path d="M2136 1358l8 1l2 4h-13z" fill="#9aa3ac"/></g>
<g><circle cx="2296.5" cy="1338.5" r="23" fill="#fff" stroke="#222" stroke-width="1.6"/><path d="M2315.5 1338.5L2319.0 1338.5" stroke="#111" stroke-width="1.6"/><path d="M2313.0 1348.0L2316.0 1349.8" stroke="#111" stroke-width="1.6"/><path d="M2306.0 1355.0L2307.7 1358.0" stroke="#111" stroke-width="1.6"/><path d="M2296.5 1357.5L2296.5 1361.0" stroke="#111" stroke-width="1.6"/><path d="M2287.0 1355.0L2285.2 1358.0" stroke="#111" stroke-width="1.6"/><path d="M2280.0 1348.0L2277.0 1349.7" stroke="#111" stroke-width="1.6"/><path d="M2277.5 1338.5L2274.0 1338.5" stroke="#111" stroke-width="1.6"/><path d="M2280.0 1329.0L2277.0 1327.2" stroke="#111" stroke-width="1.6"/><path d="M2287.0 1322.0L2285.3 1319.0" stroke="#111" stroke-width="1.6"/><path d="M2296.5 1319.5L2296.5 1316.0" stroke="#111" stroke-width="1.6"/><path d="M2306.0 1322.0L2307.8 1319.0" stroke="#111" stroke-width="1.6"/><path d="M2313.0 1329.0L2316.0 1327.3" stroke="#111" stroke-width="1.6"/><path d="M2296.5 1338.5V1319M2296.5 1338.5H2309.5" stroke="#111" stroke-width="2.2" fill="none"/></g>
<g><path d="M2347 1318H2372L2381 1327V1360H2347Z" fill="#f4f4f4" stroke="#b5b5b5" stroke-width="1"/><path d="M2372 1318V1327H2381" fill="#ddd" stroke="#b5b5b5"/><path d="M2352 1326h17M2352 1331h24M2352 1336h24M2352 1341h24M2352 1346h24M2352 1351h14M2358 1324v30M2366 1324v30" stroke="#d0d0d0" stroke-width="1" fill="none"/><path d="M2374 1343h6v6h6v6h-6v6h-6v-6h-6v-6h6z" fill="#a6d24a" stroke="#7fae2a" stroke-width="1"/></g>
<g><polygon points="2456.2,1334.6 2456.2,1342.4 2450.5,1342.8 2448.6,1347.4 2452.3,1351.8 2446.8,1357.3 2442.4,1353.6 2437.8,1355.5 2437.4,1361.2 2429.6,1361.2 2429.2,1355.5 2424.6,1353.6 2420.2,1357.3 2414.7,1351.8 2418.4,1347.4 2416.5,1342.8 2410.8,1342.4 2410.8,1334.6 2416.5,1334.2 2418.4,1329.6 2414.7,1325.2 2420.2,1319.7 2424.6,1323.4 2429.2,1321.5 2429.6,1315.8 2437.4,1315.8 2437.8,1321.5 2442.4,1323.4 2446.8,1319.7 2452.3,1325.2 2448.6,1329.6 2450.5,1334.2" fill="url(#ggear)" stroke="#8e8e8e" stroke-width="1"/><circle cx="2433.5" cy="1338.5" r="9" fill="#e1e1e1" stroke="#8e8e8e" stroke-width="1"/></g>
<g transform="rotate(45 2503.5 1338.5)"><path d="M2498.0 1319.5h11v13.5h13.5v11h-13.5v13.5h-11v-13.5h-13.5v-11h13.5z" fill="url(#gbl)" stroke="#2a7fc4" stroke-width="1"/></g>
</svg>
</div>
<div class="abs" style="left:0;top:1380px;width:2560px;height:60px;background:#101010">
<div class="abs" style="left:527px;top:0;width:73px;height:60px;background:#343434"></div>
<div class="abs" style="left:82.5px;top:57px;width:61.5px;height:3px;background:#a9d8f8"></div>
<div class="abs" style="left:232.5px;top:57px;width:61.5px;height:3px;background:#a9d8f8"></div>
<div class="abs" style="left:382.5px;top:57px;width:61.5px;height:3px;background:#a9d8f8"></div>
<div class="abs" style="left:457.5px;top:57px;width:61.5px;height:3px;background:#a9d8f8"></div>
<div class="abs" style="left:527px;top:57px;width:73px;height:3px;background:#a9d8f8"></div>
<div class="abs" style="left:607.5px;top:57px;width:61.5px;height:3px;background:#a9d8f8"></div>
<div class="abs" style="left:682.5px;top:57px;width:61.5px;height:3px;background:#a9d8f8"></div>
<svg style="left:0;top:0" width="2560" height="60" viewBox="0 0 2560 60">
<defs><radialGradient id="gff" cx=".5" cy=".4" r=".6"><stop offset="0" stop-color="#ffb02a"/><stop offset=".55" stop-color="#ff7a1e"/><stop offset="1" stop-color="#e02a3a"/></radialGradient><radialGradient id="gab" cx=".5" cy=".5" r=".5"><stop offset="0" stop-color="#7fe070"/><stop offset=".5" stop-color="#25a824"/><stop offset=".85" stop-color="#0f5a14"/><stop offset="1" stop-color="#555"/></radialGradient><linearGradient id="gsl" x1="0" y1="0" x2="0" y2="1"><stop offset="0" stop-color="#b5d8f3"/><stop offset="1" stop-color="#7db5e6"/></linearGradient></defs>
<path d="M24 20.8L34 19.4V29H24ZM35.5 19.2L48 17.4V29H35.5ZM24 30.5H34V40.2L24 38.8ZM35.5 30.5H48V42.2L35.5 40.4Z" fill="#fff"/>
<path d="M97 19.500a2 2 0 0 1 2 -2h9l3 3h16.500a2 2 0 0 1 2 2v18a2 2 0 0 1 -2 2h-28.500a2 2 0 0 1 -2 -2z" fill="#f7d36e"/><path d="M97 23.500h32.500v17a2 2 0 0 1 -2 2h-28.500a2 2 0 0 1 -2 -2z" fill="#fbe08f"/><path d="M102.600 30.400h21.100v13.100h-6v-8.300h-9.700v8.300h-5.400z" fill="#32a4e4"/>
<ellipse cx="184" cy="34" rx="13" ry="5" fill="#a08a8c" transform="rotate(-18 184 34)"/><ellipse cx="187" cy="26" rx="15.500" ry="9.500" fill="#f3f3f3" stroke="#d3434a" stroke-width="2" transform="rotate(-20 187 26)"/><path d="M185 18L192 33M195 19L189 33" stroke="#9a9a9a" stroke-width="1.800"/><ellipse cx="191.500" cy="41" rx="2.600" ry="4.500" fill="none" stroke="#2f97d6" stroke-width="2.200" transform="rotate(15 191.500 41)"/><ellipse cx="198.500" cy="35.500" rx="2.600" ry="4.500" fill="none" stroke="#2f97d6" stroke-width="2.200" transform="rotate(-55 198.500 35.500)"/>
<circle cx="263" cy="30.500" r="16.500" fill="url(#gff)"/><circle cx="264.500" cy="27.500" r="9" fill="#2d5fd6"/><path d="M258 22q5 -4 10 -1q-3 1 -3 4q3 0 4 3q-1 4 -5 4q-4 0 -6 -4q3 7 10 6q6 -1 8 -8q2 9 -4 15q-9 6 -18 0q-7 -6 -6 -15q1 -6 5 -9q-1 4 1 7q1 -3 4 -2z" fill="#ff8a16"/><path d="M269 13q9 5 9 17q0 -4 -3 -7q1 4 -2 7q0 -9 -6 -12q3 -1 2 -5z" fill="#ffd23a"/>
<ellipse cx="337.5" cy="30" rx="17" ry="17.5" fill="#ef1d2b"/><ellipse cx="337.5" cy="30" rx="7.6" ry="12.5" fill="#101010"/>
<path d="M401 13.500l26 -2v35l-26 -3z" fill="url(#gsl)"/><path d="M401 36l26 1.500v9l-26 -3z" fill="#cfd6dd"/><path d="M405 21q9 -6 18 1" stroke="#3a86d2" stroke-width="1.600" fill="none" stroke-dasharray="2 1.500"/><path d="M411 34l7 -13" stroke="#1e62b3" stroke-width="1.600"/>
<defs><linearGradient id="ghw2" x1="0" y1="0" x2="0" y2="1"><stop offset="0" stop-color="#7cc0ea"/><stop offset="1" stop-color="#12609e"/></linearGradient></defs><rect x="472" y="14.500" width="32" height="30" rx="5" fill="#0c0c0c"/><path d="M472 19.500a5 5 0 0 1 5 -5h22a5 5 0 0 1 5 5v14h-32z" fill="url(#ghw2)"/><path d="M480.800 17.500v14M488.600 22v9.500M480.800 35.500v7.500M488.600 35.500v7.500M495.200 35.500v7.500" stroke="#fff" stroke-width="3.700"/><circle cx="495.200" cy="28.500" r="2" fill="#fff"/>
<circle cx="562.8" cy="30" r="16.500" fill="url(#gab)"/><circle cx="562.8" cy="30" r="16" fill="none" stroke="#b9bdb9" stroke-width="2.400"/><path d="M546.8 16L560.8 23L571.8 19L566.8 29L571.8 35L564.8 35L559.8 42L557.8 33Z" fill="#e4e4e4" stroke="#8a8a8a" stroke-width=".7"/>
<circle cx="712.8" cy="30" r="16.500" fill="url(#gab)"/><circle cx="712.8" cy="30" r="16" fill="none" stroke="#b9bdb9" stroke-width="2.400"/><path d="M696.8 16L710.8 23L721.8 19L716.8 29L721.8 35L714.8 35L709.8 42L707.8 33Z" fill="#e4e4e4" stroke="#8a8a8a" stroke-width=".7"/>
<path d="M626 14h17.500l6.500 6.500v25.500h-24z" fill="#f4f4f4"/><path d="M643.500 14v6.500h6.500" fill="#cfcfcf"/>
<path d="M2201.5 33.5L2210 25L2218.5 33.5" stroke="#fff" stroke-width="1.4" fill="none"/>
<rect x="2239.5" y="25.500" width="18" height="11" fill="#fff" stroke="#fff" stroke-width="1.3"/><rect x="2241.500" y="27.500" width="14" height="7" fill="#f2f2f2"/><path d="M2258 29v4" stroke="#fff" stroke-width="1.6"/><path d="M2234 24v4h5M2236 22v3M2238.5 22v3" stroke="#fff" stroke-width="1.2" fill="none"/>
<path d="M2274.5 20v11" stroke="#fff" stroke-width="2.6"/><circle cx="2274.500" cy="35" r="1.6" fill="#fff"/><circle cx="2281.500" cy="36.500" r="2.4" fill="#fff"/><circle cx="2289.500" cy="36.500" r="2.4" fill="#fff"/><path d="M2277 36.500h10" stroke="#fff" stroke-width="1.2"/>
<path d="M2313 36a13 13 0 0 1 13 -13M2317 36a9 9 0 0 1 9 -9M2321 36a5 5 0 0 1 5 -5" stroke="#7a7a7a" stroke-width="1.6" fill="none"/><circle cx="2313" cy="36.500" r="6" fill="#d6262c"/><path d="M2310.2 33.700l5.600 5.600M2315.800 33.700l-5.600 5.600" stroke="#fff" stroke-width="1.4"/>
<path d="M2344 26.500h4l5.500 -5v17l-5.500 -5h-4z" fill="none" stroke="#fff" stroke-width="1.3"/><path d="M2357 25.500q3 4.500 0 9M2360.500 22.500q5 7.500 0 15" stroke="#cfcfcf" stroke-width="1.2" fill="none"/>
<path d="M2498.500 18.500h24v18h-16.500l-4.500 5.500v-5.500h-3z" fill="#fff"/><path d="M2503 24h15M2503 27.500h15M2503 31h10" stroke="#101010" stroke-width="1"/><circle cx="2521.500" cy="41.500" r="11.500" fill="#3a3a3a" stroke="#6e6e6e" stroke-width="1.4"/>
<text x="2521.500" y="47.500" text-anchor="middle" font-family="Liberation Sans, sans-serif" font-size="16" font-weight="bold" fill="#fff">3</text>
<path d="M2553.500 0V60" stroke="#6a6a6a" stroke-width="1"/>
</svg>
<div class="abs" style="left:2375px;top:5px;width:101px;text-align:center;font-size:17.3px;line-height:24px;color:#fff">21:21</div>
<div class="abs" style="left:2375px;top:33px;width:101px;text-align:center;font-size:17.3px;line-height:24px;color:#fff">10.08.2019</div>
</div>
</body></html>
